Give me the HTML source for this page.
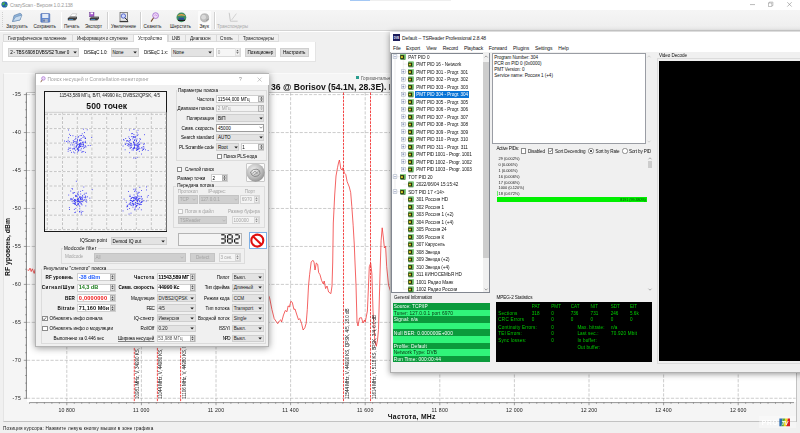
<!DOCTYPE html>
<html lang="ru"><head><meta charset="utf-8"><title>CrazyScan</title>
<style>
html,body{margin:0;padding:0;}
body{width:800px;height:433px;overflow:hidden;background:#f0f0f0;position:relative;font-family:"Liberation Sans",sans-serif;}
#root{position:absolute;left:0;top:0;width:800px;height:433px;overflow:hidden;filter:blur(0.35px);}
#root div,#root span.t,#root svg{position:absolute;box-sizing:border-box;}
span.t{white-space:nowrap;}
</style></head><body><div id="root">
<div style="left:0.00px;top:0.00px;width:800.00px;height:10.00px;background:#ffffff;"></div>
<div style="left:350.00px;top:0.00px;width:20.00px;height:1.00px;background:#a4c8f4;"></div>
<div style="left:370.00px;top:0.00px;width:81.00px;height:1.00px;background:#efefef;"></div>
<svg style="left:0.5px;top:0.8px;" width="7" height="7" viewBox="0 0 7 7"><circle cx="3.5" cy="3.5" r="3.1" fill="#1f5fb4"/><path d="M1.2 2.2 Q2.6 0.9 3.8 1.6 Q4.4 2.8 3.2 3.6 Q2.4 4.8 1.4 4.2 Z" fill="#4bb04a"/><path d="M4.4 3.6 Q5.8 3.2 6 4.4 Q5.4 5.8 4.4 5.4 Z" fill="#4bb04a"/></svg>
<span class="t" style="top:2px;font-size:5px;line-height:6.00px;color:#9a9a9a;letter-spacing:-0.190px;left:10.00px;">CrazyScan - Версия 1.0.2.138</span>
<svg style="left:745px;top:0px;" width="55" height="9" viewBox="0 0 55 9"><path d="M5 4.6 H10" stroke="#8a8a8a" stroke-width="0.6" fill="none"/><rect x="23.3" y="3" width="3.6" height="3.6" fill="none" stroke="#8a8a8a" stroke-width="0.5"/><path d="M24.3 3 V2.1 H27.9 V5.6 H26.9" fill="none" stroke="#8a8a8a" stroke-width="0.5"/><path d="M42.3 2.2 L46.7 6.6 M46.7 2.2 L42.3 6.6" stroke="#8a8a8a" stroke-width="0.6"/></svg>
<div style="left:0.00px;top:10.00px;width:800.00px;height:20.00px;background:linear-gradient(#f5f5f5,#eeeeee);"></div>
<div style="left:0.00px;top:29.60px;width:800.00px;height:0.90px;background:#d4d4d4;"></div>
<div style="left:0.00px;top:30.50px;width:800.00px;height:0.80px;background:#ffffff;"></div>
<div style="left:2.00px;top:11.50px;width:0.70px;height:0.90px;background:#d0d0d0;"></div>
<div style="left:2.00px;top:13.60px;width:0.70px;height:0.90px;background:#d0d0d0;"></div>
<div style="left:2.00px;top:15.70px;width:0.70px;height:0.90px;background:#d0d0d0;"></div>
<div style="left:2.00px;top:17.80px;width:0.70px;height:0.90px;background:#d0d0d0;"></div>
<div style="left:2.00px;top:19.90px;width:0.70px;height:0.90px;background:#d0d0d0;"></div>
<div style="left:2.00px;top:22.00px;width:0.70px;height:0.90px;background:#d0d0d0;"></div>
<div style="left:2.00px;top:24.10px;width:0.70px;height:0.90px;background:#d0d0d0;"></div>
<div style="left:2.00px;top:26.20px;width:0.70px;height:0.90px;background:#d0d0d0;"></div>
<div style="left:60.50px;top:11.50px;width:0.50px;height:17.00px;background:#d0d0d0;"></div>
<div style="left:61.00px;top:11.50px;width:0.50px;height:17.00px;background:#ffffff;"></div>
<div style="left:107.00px;top:11.50px;width:0.50px;height:17.00px;background:#d0d0d0;"></div>
<div style="left:107.50px;top:11.50px;width:0.50px;height:17.00px;background:#ffffff;"></div>
<div style="left:140.40px;top:11.50px;width:0.50px;height:17.00px;background:#d0d0d0;"></div>
<div style="left:140.90px;top:11.50px;width:0.50px;height:17.00px;background:#ffffff;"></div>
<div style="left:214.00px;top:11.50px;width:0.50px;height:17.00px;background:#d0d0d0;"></div>
<div style="left:214.50px;top:11.50px;width:0.50px;height:17.00px;background:#ffffff;"></div>
<div style="left:198.00px;top:11.00px;width:13.00px;height:18.50px;background:#fbfbfb;"></div>
<span class="t" style="top:24px;font-size:4.6px;line-height:5.52px;color:#202020;letter-spacing:0.055px;left:6.20px;">Загрузить</span>
<span class="t" style="top:24px;font-size:4.6px;line-height:5.52px;color:#202020;letter-spacing:-0.040px;left:33.50px;">Сохранить</span>
<span class="t" style="top:24px;font-size:4.6px;line-height:5.52px;color:#202020;letter-spacing:0.055px;left:64.00px;">Печать</span>
<span class="t" style="top:24px;font-size:4.6px;line-height:5.52px;color:#202020;letter-spacing:-0.040px;left:85.00px;">Экспорт</span>
<span class="t" style="top:24px;font-size:4.6px;line-height:5.52px;color:#202020;letter-spacing:-0.034px;left:111.00px;">Увеличение</span>
<span class="t" style="top:24px;font-size:4.6px;line-height:5.52px;color:#202020;letter-spacing:0.056px;left:143.60px;">Сканить</span>
<span class="t" style="top:24px;font-size:4.6px;line-height:5.52px;color:#202020;letter-spacing:0.024px;left:170.00px;">Шерстить</span>
<span class="t" style="top:24px;font-size:4.6px;line-height:5.52px;color:#202020;letter-spacing:0.042px;left:199.40px;">Звук</span>
<span class="t" style="top:24px;font-size:4.6px;line-height:5.52px;color:#a8a8a8;letter-spacing:-0.017px;left:217.00px;">Транспондеры</span>
<svg style="left:11px;top:11.5px;" width="12" height="11" viewBox="0 0 12 11"><path d="M1.5 9.5 L3 3.5 L9 1.2 L10.5 2.2 L9 8 Z" fill="#8fb3d9" stroke="#4a6f9a" stroke-width="0.5"/><path d="M1.5 9.5 L4.5 5 L11 3 L9 8 Z" fill="#c9dcef" stroke="#5c82ad" stroke-width="0.5"/></svg>
<svg style="left:40px;top:12.5px;" width="11" height="10" viewBox="0 0 11 10"><rect x="0.8" y="0.6" width="9" height="8.6" rx="0.6" fill="#6288cf" stroke="#3f5fa6" stroke-width="0.5"/><rect x="2.2" y="1" width="6.2" height="4" fill="#e4ebf7"/><rect x="2.8" y="6" width="5" height="3.2" fill="#aab6cc"/><rect x="3.4" y="6.6" width="1.2" height="2" fill="#4a5f8e"/></svg>
<svg style="left:67px;top:13px;" width="11" height="9" viewBox="0 0 11 9"><path d="M3 3.6 L5.2 0.8 L9.8 0.8 L8.2 3.6 Z" fill="#ffffff" stroke="#9a9a9a" stroke-width="0.4"/><path d="M0.8 5 L2.8 3.4 L9.8 3.4 L8.2 5 Z" fill="#6e6e6e"/><path d="M0.8 5 H8.2 V7.4 H0.8 Z" fill="#3c3c3c"/><path d="M8.2 5 L9.8 3.4 V5.8 L8.2 7.4 Z" fill="#222"/><rect x="1.8" y="6" width="4.4" height="0.7" fill="#4aa0e8"/></svg>
<svg style="left:88px;top:12px;" width="12" height="10" viewBox="0 0 12 10"><rect x="1.6" y="0.4" width="4.4" height="4.4" fill="#a056c8" stroke="#5e2d86" stroke-width="0.4"/><rect x="2.6" y="0.6" width="2.4" height="1.6" fill="#fff"/><path d="M1.8 6 L3.8 4.4 L10.8 4.4 L9.2 6 Z" fill="#6e6e6e"/><path d="M1.8 6 H9.2 V8.4 H1.8 Z" fill="#3c3c3c"/><path d="M9.2 6 L10.8 4.4 V6.8 L9.2 8.4 Z" fill="#222"/><rect x="2.8" y="7" width="4.4" height="0.7" fill="#4aa0e8"/></svg>
<svg style="left:118.5px;top:11.8px;" width="10" height="11" viewBox="0 0 10 11"><rect x="1" y="0.6" width="7.4" height="8.6" fill="#e6e6e6" stroke="#4a4a4a" stroke-width="0.6"/><circle cx="4.4" cy="4" r="2.2" fill="#cfd8ff" stroke="#2a3fb8" stroke-width="0.7"/><path d="M6 5.8 L8.6 8.6" stroke="#222" stroke-width="1"/><rect x="0.6" y="9" width="8.6" height="1.2" fill="#3a3a3a"/></svg>
<svg style="left:149.5px;top:12px;" width="10" height="11" viewBox="0 0 10 11"><circle cx="5.6" cy="3.6" r="2.9" fill="#ead6f6" stroke="#a26ad0" stroke-width="0.8"/><path d="M3.6 5.8 L1 9.6" stroke="#7a4a2a" stroke-width="1.1"/><path d="M4.4 3.6 L5.4 2.6 L6.4 4 L7.2 3" stroke="#c04ad0" stroke-width="0.4" fill="none"/></svg>
<svg style="left:176px;top:11.8px;" width="11" height="11" viewBox="0 0 11 11"><circle cx="5.4" cy="5.4" r="4.9" fill="#3f8f62"/><path d="M1 4 Q5.4 0.2 9.8 4 Q5.4 3 1 4Z" fill="#e9a04a"/><path d="M2 7.6 H9 V9 H2Z" fill="#1e1e1e"/><path d="M2.6 5.6 H8 V7.6 H2.6Z" fill="#2a4aa0"/></svg>
<svg style="left:200px;top:12.5px;" width="10" height="10" viewBox="0 0 10 10"><circle cx="4.6" cy="4.8" r="4.1" fill="#bdbdbd" stroke="#9a9a9a" stroke-width="0.5"/><circle cx="3.6" cy="4.2" r="2.4" fill="#d9d9d9"/><path d="M6 7.6 L8.8 6" stroke="#8a8a8a" stroke-width="0.8"/></svg>
<svg style="left:228px;top:12px;" width="11" height="11" viewBox="0 0 11 11"><path d="M1.2 0.8 L2.4 9.2 H9.6" fill="none" stroke="#b8b8b8" stroke-width="0.7"/><path d="M3.6 8 L8.4 1.6" stroke="#c4c4c4" stroke-width="0.7"/></svg>
<div style="left:3.00px;top:34.40px;width:276.00px;height:7.80px;background:#f0f0f0;border:0.5px solid #dcdcdc;"></div>
<div style="left:71.70px;top:34.80px;width:0.50px;height:7.20px;background:#d9d9d9;"></div>
<div style="left:132.50px;top:34.80px;width:0.50px;height:7.20px;background:#d9d9d9;"></div>
<div style="left:168.00px;top:34.80px;width:0.50px;height:7.20px;background:#d9d9d9;"></div>
<div style="left:185.00px;top:34.80px;width:0.50px;height:7.20px;background:#d9d9d9;"></div>
<div style="left:215.50px;top:34.80px;width:0.50px;height:7.20px;background:#d9d9d9;"></div>
<div style="left:238.00px;top:34.80px;width:0.50px;height:7.20px;background:#d9d9d9;"></div>
<div style="left:132.50px;top:33.60px;width:35.80px;height:9.00px;background:#ffffff;border:0.5px solid #d9d9d9;border-bottom:none;"></div>
<span class="t" style="top:36px;font-size:4.6px;line-height:5.52px;color:#1a1a1a;letter-spacing:-0.048px;left:8.00px;">Географическое положение</span>
<span class="t" style="top:36px;font-size:4.6px;line-height:5.52px;color:#1a1a1a;letter-spacing:-0.057px;left:77.00px;">Информация о спутнике</span>
<span class="t" style="top:36px;font-size:4.6px;line-height:5.52px;color:#1a1a1a;letter-spacing:-0.006px;left:138.00px;">Устройство</span>
<span class="t" style="top:36px;font-size:4.6px;line-height:5.52px;color:#1a1a1a;letter-spacing:-0.483px;left:172.00px;">LNB</span>
<span class="t" style="top:36px;font-size:4.6px;line-height:5.52px;color:#1a1a1a;letter-spacing:0.013px;left:190.00px;">Диапазон</span>
<span class="t" style="top:36px;font-size:4.6px;line-height:5.52px;color:#1a1a1a;letter-spacing:-0.116px;left:220.00px;">Стиль</span>
<span class="t" style="top:36px;font-size:4.6px;line-height:5.52px;color:#1a1a1a;letter-spacing:-0.017px;left:243.00px;">Транспондеры</span>
<div style="left:2.30px;top:41.80px;width:313.30px;height:20.40px;background:#ffffff;border:0.5px solid #e4e4e4;border-top:none;"></div>
<div style="left:8.20px;top:47.50px;width:70.60px;height:9.00px;background:#e3e3e3;border:0.5px solid #cfcfcf;"></div>
<span class="t" style="top:50px;font-size:4.6px;line-height:5.52px;color:#000;letter-spacing:-0.200px;left:10.20px;">2 - TBS 6908 DVBS/S2 Tuner 0</span>
<svg style="left:73.19999999999999px;top:50.8px;" width="4.4" height="3" viewBox="0 0 4.4 3"><path d="M0.3 0.4 H3.9 L2.1 2.5 Z" fill="#222"/></svg>
<span class="t" style="top:50px;font-size:4.5px;line-height:5.40px;color:#000;letter-spacing:-0.115px;left:84.00px;">DiSEqC 1.0:</span>
<div style="left:110.50px;top:47.50px;width:28.50px;height:9.00px;background:#e3e3e3;border:0.5px solid #cfcfcf;"></div>
<span class="t" style="top:50px;font-size:4.6px;line-height:5.52px;color:#000;left:112.50px;">None</span>
<svg style="left:133.4px;top:50.8px;" width="4.4" height="3" viewBox="0 0 4.4 3"><path d="M0.3 0.4 H3.9 L2.1 2.5 Z" fill="#222"/></svg>
<span class="t" style="top:50px;font-size:4.5px;line-height:5.40px;color:#000;letter-spacing:-0.046px;left:144.00px;">DiSEqC 1.x:</span>
<div style="left:171.00px;top:47.50px;width:43.00px;height:9.00px;background:#e3e3e3;border:0.5px solid #cfcfcf;"></div>
<span class="t" style="top:50px;font-size:4.6px;line-height:5.52px;color:#000;left:173.00px;">None</span>
<svg style="left:208.4px;top:50.8px;" width="4.4" height="3" viewBox="0 0 4.4 3"><path d="M0.3 0.4 H3.9 L2.1 2.5 Z" fill="#222"/></svg>
<div style="left:216.00px;top:47.50px;width:25.00px;height:9.00px;background:#f6f6f6;border:0.5px solid #dadada;"></div>
<div style="left:235.10px;top:48.10px;width:5.40px;height:7.80px;background:#f2f2f2;border:0.4px solid #e2e2e2;"></div>
<svg style="left:236.3px;top:48.3px;" width="3" height="7.4" viewBox="0 0 3 7.4"><path d="M0.3 3.20 L1.5 1.70 L2.7 3.20 Z" fill="#555"/><path d="M0.3 4.20 L1.5 5.70 L2.7 4.20 Z" fill="#555"/></svg>
<span class="t" style="top:50px;font-size:4.6px;line-height:5.52px;color:#9a9a9a;left:217.80px;">0</span>
<div style="left:245.00px;top:47.50px;width:31.00px;height:9.00px;background:#e1e1e1;border:0.5px solid #cfcfcf;"></div>
<span class="t" style="top:50px;font-size:4.6px;line-height:5.52px;color:#000;left:160.50px;width:200px;text-align:center;">Позиционер</span>
<div style="left:279.50px;top:47.50px;width:29.50px;height:9.00px;background:#e1e1e1;border:0.5px solid #cfcfcf;"></div>
<span class="t" style="top:50px;font-size:4.6px;line-height:5.52px;color:#000;left:194.25px;width:200px;text-align:center;">Настроить</span>
<div style="left:2.60px;top:73.20px;width:794.20px;height:348.60px;background:#f5f5f5;border:0.5px solid #c2c2c2;border-top-color:#fafafa;border-left-color:#e4e4e4;"></div>
<div style="left:26.80px;top:93.00px;width:769.00px;height:309.00px;background:#ffffff;"></div>
<svg style="left:0px;top:0px;" width="800" height="433" viewBox="0 0 800 433"><path d="M66.80 92.5 V402.3" stroke="#a4a4a4" stroke-width="0.55" stroke-dasharray="3.2 1.5" fill="none"/><path d="M141.40 92.5 V402.3" stroke="#a4a4a4" stroke-width="0.55" stroke-dasharray="3.2 1.5" fill="none"/><path d="M216.00 92.5 V402.3" stroke="#a4a4a4" stroke-width="0.55" stroke-dasharray="3.2 1.5" fill="none"/><path d="M290.60 92.5 V402.3" stroke="#a4a4a4" stroke-width="0.55" stroke-dasharray="3.2 1.5" fill="none"/><path d="M365.20 92.5 V402.3" stroke="#a4a4a4" stroke-width="0.55" stroke-dasharray="3.2 1.5" fill="none"/><path d="M439.80 92.5 V402.3" stroke="#a4a4a4" stroke-width="0.55" stroke-dasharray="3.2 1.5" fill="none"/><path d="M514.40 92.5 V402.3" stroke="#a4a4a4" stroke-width="0.55" stroke-dasharray="3.2 1.5" fill="none"/><path d="M589.00 92.5 V402.3" stroke="#a4a4a4" stroke-width="0.55" stroke-dasharray="3.2 1.5" fill="none"/><path d="M663.60 92.5 V402.3" stroke="#a4a4a4" stroke-width="0.55" stroke-dasharray="3.2 1.5" fill="none"/><path d="M738.20 92.5 V402.3" stroke="#a4a4a4" stroke-width="0.55" stroke-dasharray="3.2 1.5" fill="none"/><path d="M27.0 94.60 H795.6" stroke="#a4a4a4" stroke-width="0.55" stroke-dasharray="3.2 1.5" fill="none"/><path d="M27.0 132.56 H795.6" stroke="#a4a4a4" stroke-width="0.55" stroke-dasharray="3.2 1.5" fill="none"/><path d="M27.0 170.52 H795.6" stroke="#a4a4a4" stroke-width="0.55" stroke-dasharray="3.2 1.5" fill="none"/><path d="M27.0 208.48 H795.6" stroke="#a4a4a4" stroke-width="0.55" stroke-dasharray="3.2 1.5" fill="none"/><path d="M27.0 246.44 H795.6" stroke="#a4a4a4" stroke-width="0.55" stroke-dasharray="3.2 1.5" fill="none"/><path d="M27.0 284.40 H795.6" stroke="#a4a4a4" stroke-width="0.55" stroke-dasharray="3.2 1.5" fill="none"/><path d="M27.0 322.36 H795.6" stroke="#a4a4a4" stroke-width="0.55" stroke-dasharray="3.2 1.5" fill="none"/><path d="M27.0 360.32 H795.6" stroke="#a4a4a4" stroke-width="0.55" stroke-dasharray="3.2 1.5" fill="none"/><path d="M27.0 398.28 H795.6" stroke="#a4a4a4" stroke-width="0.55" stroke-dasharray="3.2 1.5" fill="none"/><path d="M27.0 92.5 H795.6" stroke="#9a9a9a" stroke-width="0.5" fill="none"/><path d="M26.4 92.5 V398.78" stroke="#333" stroke-width="0.6" fill="none"/><path d="M29.5 402.6 H794" stroke="#444" stroke-width="0.55" fill="none"/><path d="M23.80 94.60 H26.4" stroke="#333" stroke-width="0.45" fill="none"/><path d="M25.20 102.19 H26.4" stroke="#333" stroke-width="0.45" fill="none"/><path d="M25.20 109.78 H26.4" stroke="#333" stroke-width="0.45" fill="none"/><path d="M25.20 117.38 H26.4" stroke="#333" stroke-width="0.45" fill="none"/><path d="M25.20 124.97 H26.4" stroke="#333" stroke-width="0.45" fill="none"/><path d="M23.80 132.56 H26.4" stroke="#333" stroke-width="0.45" fill="none"/><path d="M25.20 140.15 H26.4" stroke="#333" stroke-width="0.45" fill="none"/><path d="M25.20 147.74 H26.4" stroke="#333" stroke-width="0.45" fill="none"/><path d="M25.20 155.34 H26.4" stroke="#333" stroke-width="0.45" fill="none"/><path d="M25.20 162.93 H26.4" stroke="#333" stroke-width="0.45" fill="none"/><path d="M23.80 170.52 H26.4" stroke="#333" stroke-width="0.45" fill="none"/><path d="M25.20 178.11 H26.4" stroke="#333" stroke-width="0.45" fill="none"/><path d="M25.20 185.70 H26.4" stroke="#333" stroke-width="0.45" fill="none"/><path d="M25.20 193.30 H26.4" stroke="#333" stroke-width="0.45" fill="none"/><path d="M25.20 200.89 H26.4" stroke="#333" stroke-width="0.45" fill="none"/><path d="M23.80 208.48 H26.4" stroke="#333" stroke-width="0.45" fill="none"/><path d="M25.20 216.07 H26.4" stroke="#333" stroke-width="0.45" fill="none"/><path d="M25.20 223.66 H26.4" stroke="#333" stroke-width="0.45" fill="none"/><path d="M25.20 231.26 H26.4" stroke="#333" stroke-width="0.45" fill="none"/><path d="M25.20 238.85 H26.4" stroke="#333" stroke-width="0.45" fill="none"/><path d="M23.80 246.44 H26.4" stroke="#333" stroke-width="0.45" fill="none"/><path d="M25.20 254.03 H26.4" stroke="#333" stroke-width="0.45" fill="none"/><path d="M25.20 261.62 H26.4" stroke="#333" stroke-width="0.45" fill="none"/><path d="M25.20 269.22 H26.4" stroke="#333" stroke-width="0.45" fill="none"/><path d="M25.20 276.81 H26.4" stroke="#333" stroke-width="0.45" fill="none"/><path d="M23.80 284.40 H26.4" stroke="#333" stroke-width="0.45" fill="none"/><path d="M25.20 291.99 H26.4" stroke="#333" stroke-width="0.45" fill="none"/><path d="M25.20 299.58 H26.4" stroke="#333" stroke-width="0.45" fill="none"/><path d="M25.20 307.18 H26.4" stroke="#333" stroke-width="0.45" fill="none"/><path d="M25.20 314.77 H26.4" stroke="#333" stroke-width="0.45" fill="none"/><path d="M23.80 322.36 H26.4" stroke="#333" stroke-width="0.45" fill="none"/><path d="M25.20 329.95 H26.4" stroke="#333" stroke-width="0.45" fill="none"/><path d="M25.20 337.54 H26.4" stroke="#333" stroke-width="0.45" fill="none"/><path d="M25.20 345.14 H26.4" stroke="#333" stroke-width="0.45" fill="none"/><path d="M25.20 352.73 H26.4" stroke="#333" stroke-width="0.45" fill="none"/><path d="M23.80 360.32 H26.4" stroke="#333" stroke-width="0.45" fill="none"/><path d="M25.20 367.91 H26.4" stroke="#333" stroke-width="0.45" fill="none"/><path d="M25.20 375.50 H26.4" stroke="#333" stroke-width="0.45" fill="none"/><path d="M25.20 383.10 H26.4" stroke="#333" stroke-width="0.45" fill="none"/><path d="M25.20 390.69 H26.4" stroke="#333" stroke-width="0.45" fill="none"/><path d="M23.80 398.28 H26.4" stroke="#333" stroke-width="0.45" fill="none"/><path d="M29.50 402.6 V403.80" stroke="#333" stroke-width="0.45" fill="none"/><path d="M36.96 402.6 V403.80" stroke="#333" stroke-width="0.45" fill="none"/><path d="M44.42 402.6 V403.80" stroke="#333" stroke-width="0.45" fill="none"/><path d="M51.88 402.6 V403.80" stroke="#333" stroke-width="0.45" fill="none"/><path d="M59.34 402.6 V403.80" stroke="#333" stroke-width="0.45" fill="none"/><path d="M66.80 402.6 V405.20" stroke="#333" stroke-width="0.45" fill="none"/><path d="M74.26 402.6 V403.80" stroke="#333" stroke-width="0.45" fill="none"/><path d="M81.72 402.6 V403.80" stroke="#333" stroke-width="0.45" fill="none"/><path d="M89.18 402.6 V403.80" stroke="#333" stroke-width="0.45" fill="none"/><path d="M96.64 402.6 V403.80" stroke="#333" stroke-width="0.45" fill="none"/><path d="M104.10 402.6 V403.80" stroke="#333" stroke-width="0.45" fill="none"/><path d="M111.56 402.6 V403.80" stroke="#333" stroke-width="0.45" fill="none"/><path d="M119.02 402.6 V403.80" stroke="#333" stroke-width="0.45" fill="none"/><path d="M126.48 402.6 V403.80" stroke="#333" stroke-width="0.45" fill="none"/><path d="M133.94 402.6 V403.80" stroke="#333" stroke-width="0.45" fill="none"/><path d="M141.40 402.6 V405.20" stroke="#333" stroke-width="0.45" fill="none"/><path d="M148.86 402.6 V403.80" stroke="#333" stroke-width="0.45" fill="none"/><path d="M156.32 402.6 V403.80" stroke="#333" stroke-width="0.45" fill="none"/><path d="M163.78 402.6 V403.80" stroke="#333" stroke-width="0.45" fill="none"/><path d="M171.24 402.6 V403.80" stroke="#333" stroke-width="0.45" fill="none"/><path d="M178.70 402.6 V403.80" stroke="#333" stroke-width="0.45" fill="none"/><path d="M186.16 402.6 V403.80" stroke="#333" stroke-width="0.45" fill="none"/><path d="M193.62 402.6 V403.80" stroke="#333" stroke-width="0.45" fill="none"/><path d="M201.08 402.6 V403.80" stroke="#333" stroke-width="0.45" fill="none"/><path d="M208.54 402.6 V403.80" stroke="#333" stroke-width="0.45" fill="none"/><path d="M216.00 402.6 V405.20" stroke="#333" stroke-width="0.45" fill="none"/><path d="M223.46 402.6 V403.80" stroke="#333" stroke-width="0.45" fill="none"/><path d="M230.92 402.6 V403.80" stroke="#333" stroke-width="0.45" fill="none"/><path d="M238.38 402.6 V403.80" stroke="#333" stroke-width="0.45" fill="none"/><path d="M245.84 402.6 V403.80" stroke="#333" stroke-width="0.45" fill="none"/><path d="M253.30 402.6 V403.80" stroke="#333" stroke-width="0.45" fill="none"/><path d="M260.76 402.6 V403.80" stroke="#333" stroke-width="0.45" fill="none"/><path d="M268.22 402.6 V403.80" stroke="#333" stroke-width="0.45" fill="none"/><path d="M275.68 402.6 V403.80" stroke="#333" stroke-width="0.45" fill="none"/><path d="M283.14 402.6 V403.80" stroke="#333" stroke-width="0.45" fill="none"/><path d="M290.60 402.6 V405.20" stroke="#333" stroke-width="0.45" fill="none"/><path d="M298.06 402.6 V403.80" stroke="#333" stroke-width="0.45" fill="none"/><path d="M305.52 402.6 V403.80" stroke="#333" stroke-width="0.45" fill="none"/><path d="M312.98 402.6 V403.80" stroke="#333" stroke-width="0.45" fill="none"/><path d="M320.44 402.6 V403.80" stroke="#333" stroke-width="0.45" fill="none"/><path d="M327.90 402.6 V403.80" stroke="#333" stroke-width="0.45" fill="none"/><path d="M335.36 402.6 V403.80" stroke="#333" stroke-width="0.45" fill="none"/><path d="M342.82 402.6 V403.80" stroke="#333" stroke-width="0.45" fill="none"/><path d="M350.28 402.6 V403.80" stroke="#333" stroke-width="0.45" fill="none"/><path d="M357.74 402.6 V403.80" stroke="#333" stroke-width="0.45" fill="none"/><path d="M365.20 402.6 V405.20" stroke="#333" stroke-width="0.45" fill="none"/><path d="M372.66 402.6 V403.80" stroke="#333" stroke-width="0.45" fill="none"/><path d="M380.12 402.6 V403.80" stroke="#333" stroke-width="0.45" fill="none"/><path d="M387.58 402.6 V403.80" stroke="#333" stroke-width="0.45" fill="none"/><path d="M395.04 402.6 V403.80" stroke="#333" stroke-width="0.45" fill="none"/><path d="M402.50 402.6 V403.80" stroke="#333" stroke-width="0.45" fill="none"/><path d="M409.96 402.6 V403.80" stroke="#333" stroke-width="0.45" fill="none"/><path d="M417.42 402.6 V403.80" stroke="#333" stroke-width="0.45" fill="none"/><path d="M424.88 402.6 V403.80" stroke="#333" stroke-width="0.45" fill="none"/><path d="M432.34 402.6 V403.80" stroke="#333" stroke-width="0.45" fill="none"/><path d="M439.80 402.6 V405.20" stroke="#333" stroke-width="0.45" fill="none"/><path d="M447.26 402.6 V403.80" stroke="#333" stroke-width="0.45" fill="none"/><path d="M454.72 402.6 V403.80" stroke="#333" stroke-width="0.45" fill="none"/><path d="M462.18 402.6 V403.80" stroke="#333" stroke-width="0.45" fill="none"/><path d="M469.64 402.6 V403.80" stroke="#333" stroke-width="0.45" fill="none"/><path d="M477.10 402.6 V403.80" stroke="#333" stroke-width="0.45" fill="none"/><path d="M484.56 402.6 V403.80" stroke="#333" stroke-width="0.45" fill="none"/><path d="M492.02 402.6 V403.80" stroke="#333" stroke-width="0.45" fill="none"/><path d="M499.48 402.6 V403.80" stroke="#333" stroke-width="0.45" fill="none"/><path d="M506.94 402.6 V403.80" stroke="#333" stroke-width="0.45" fill="none"/><path d="M514.40 402.6 V405.20" stroke="#333" stroke-width="0.45" fill="none"/><path d="M521.86 402.6 V403.80" stroke="#333" stroke-width="0.45" fill="none"/><path d="M529.32 402.6 V403.80" stroke="#333" stroke-width="0.45" fill="none"/><path d="M536.78 402.6 V403.80" stroke="#333" stroke-width="0.45" fill="none"/><path d="M544.24 402.6 V403.80" stroke="#333" stroke-width="0.45" fill="none"/><path d="M551.70 402.6 V403.80" stroke="#333" stroke-width="0.45" fill="none"/><path d="M559.16 402.6 V403.80" stroke="#333" stroke-width="0.45" fill="none"/><path d="M566.62 402.6 V403.80" stroke="#333" stroke-width="0.45" fill="none"/><path d="M574.08 402.6 V403.80" stroke="#333" stroke-width="0.45" fill="none"/><path d="M581.54 402.6 V403.80" stroke="#333" stroke-width="0.45" fill="none"/><path d="M589.00 402.6 V405.20" stroke="#333" stroke-width="0.45" fill="none"/><path d="M596.46 402.6 V403.80" stroke="#333" stroke-width="0.45" fill="none"/><path d="M603.92 402.6 V403.80" stroke="#333" stroke-width="0.45" fill="none"/><path d="M611.38 402.6 V403.80" stroke="#333" stroke-width="0.45" fill="none"/><path d="M618.84 402.6 V403.80" stroke="#333" stroke-width="0.45" fill="none"/><path d="M626.30 402.6 V403.80" stroke="#333" stroke-width="0.45" fill="none"/><path d="M633.76 402.6 V403.80" stroke="#333" stroke-width="0.45" fill="none"/><path d="M641.22 402.6 V403.80" stroke="#333" stroke-width="0.45" fill="none"/><path d="M648.68 402.6 V403.80" stroke="#333" stroke-width="0.45" fill="none"/><path d="M656.14 402.6 V403.80" stroke="#333" stroke-width="0.45" fill="none"/><path d="M663.60 402.6 V405.20" stroke="#333" stroke-width="0.45" fill="none"/><path d="M671.06 402.6 V403.80" stroke="#333" stroke-width="0.45" fill="none"/><path d="M678.52 402.6 V403.80" stroke="#333" stroke-width="0.45" fill="none"/><path d="M685.98 402.6 V403.80" stroke="#333" stroke-width="0.45" fill="none"/><path d="M693.44 402.6 V403.80" stroke="#333" stroke-width="0.45" fill="none"/><path d="M700.90 402.6 V403.80" stroke="#333" stroke-width="0.45" fill="none"/><path d="M708.36 402.6 V403.80" stroke="#333" stroke-width="0.45" fill="none"/><path d="M715.82 402.6 V403.80" stroke="#333" stroke-width="0.45" fill="none"/><path d="M723.28 402.6 V403.80" stroke="#333" stroke-width="0.45" fill="none"/><path d="M730.74 402.6 V403.80" stroke="#333" stroke-width="0.45" fill="none"/><path d="M738.20 402.6 V405.20" stroke="#333" stroke-width="0.45" fill="none"/><path d="M745.66 402.6 V403.80" stroke="#333" stroke-width="0.45" fill="none"/><path d="M753.12 402.6 V403.80" stroke="#333" stroke-width="0.45" fill="none"/><path d="M760.58 402.6 V403.80" stroke="#333" stroke-width="0.45" fill="none"/><path d="M768.04 402.6 V403.80" stroke="#333" stroke-width="0.45" fill="none"/><path d="M775.50 402.6 V403.80" stroke="#333" stroke-width="0.45" fill="none"/><path d="M782.96 402.6 V403.80" stroke="#333" stroke-width="0.45" fill="none"/><path d="M790.42 402.6 V403.80" stroke="#333" stroke-width="0.45" fill="none"/><path d="M134.3 92.5 V402.3" stroke="#f01818" stroke-width="0.8" stroke-dasharray="2.6 1" fill="none"/><path d="M157.4 92.5 V402.3" stroke="#f01818" stroke-width="0.8" stroke-dasharray="2.6 1" fill="none"/><path d="M180.6 92.5 V402.3" stroke="#f01818" stroke-width="0.8" stroke-dasharray="2.6 1" fill="none"/><path d="M343.5 92.5 V402.3" stroke="#f01818" stroke-width="0.8" stroke-dasharray="2.6 1" fill="none"/><path d="M370.5 92.5 V402.3" stroke="#f01818" stroke-width="0.8" stroke-dasharray="2.6 1" fill="none"/><path d="M27.5 270 L28.9 270.4 L30 268.1 L31.2 271.6 L32.3 268.8 L34.2 273.4 L35.1 269.3 L36 270.4 L40 268 L262 285 L266 290 L269.6 297.8 L271.9 309.4 L274.2 318.6 L277.7 323.7 L279.3 321 L280.7 319.8 L281.6 322 L283.5 315 L285.3 310.5 L287 311.7 L288.1 305.9 L289.3 307 L290.9 301.3 L292.3 302.4 L293.9 309.4 L295 309 L296.9 315 L298.5 319.8 L299.7 318.6 L301.5 323.2 L303.1 330 L304.8 327.9 L306.2 323.2 L307.3 309.4 L308.5 286 L309.6 274.7 L311.2 262 L312.9 260.3 L314 262 L315 270 L316.3 263 L317.7 264.3 L318.6 272.4 L320 274.7 L321.6 280.5 L323.3 284 L324.2 281 L325.6 288.6 L327 286 L328.6 292 L330.9 293.6 L332 286 L332.7 263 L333.3 223 L334.7 195 L336 176 L337.5 167.7 L338.5 163 L339.4 160 L340.1 164 L340.8 169 L342.2 170 L343 167.7 L344.4 173 L345.8 174.6 L347.1 181.5 L349.3 187 L350.7 192.6 L351.8 206.4 L353.2 225.8 L354.3 245 L354.9 260 L356 285 L357 322 L358 326 L359.5 318 L361.5 317.7 L363 323 L364.5 320 L365.2 322.2 L367.4 311 L368.4 288 L369.3 266.7 L370.7 263 L371.9 274 L373 311 L374.8 340.7 L376.3 346.3 L377.5 340 L378.5 329.6 L380 274 L381.1 240.7 L382.2 227.8 L383.3 237 L384.4 248 L385.6 246.3 L386.7 266.7 L388.5 285 L390.4 290.7 L392 295" stroke="#f03030" stroke-width="0.75" fill="none" stroke-linejoin="round"/></svg>
<span class="t" style="top:91px;font-size:5.2px;line-height:6.24px;color:#222;letter-spacing:0.362px;left:12.60px;">-35</span>
<span class="t" style="top:129px;font-size:5.2px;line-height:6.24px;color:#222;letter-spacing:0.362px;left:12.60px;">-40</span>
<span class="t" style="top:167px;font-size:5.2px;line-height:6.24px;color:#222;letter-spacing:0.362px;left:12.60px;">-45</span>
<span class="t" style="top:205px;font-size:5.2px;line-height:6.24px;color:#222;letter-spacing:0.362px;left:12.60px;">-50</span>
<span class="t" style="top:243px;font-size:5.2px;line-height:6.24px;color:#222;letter-spacing:0.362px;left:12.60px;">-55</span>
<span class="t" style="top:281px;font-size:5.2px;line-height:6.24px;color:#222;letter-spacing:0.362px;left:12.60px;">-60</span>
<span class="t" style="top:319px;font-size:5.2px;line-height:6.24px;color:#222;letter-spacing:0.362px;left:12.60px;">-65</span>
<span class="t" style="top:357px;font-size:5.2px;line-height:6.24px;color:#222;letter-spacing:0.362px;left:12.60px;">-70</span>
<span class="t" style="top:395px;font-size:5.2px;line-height:6.24px;color:#222;letter-spacing:0.362px;left:12.60px;">-75</span>
<span class="t" style="top:407px;font-size:5.2px;line-height:6.24px;color:#222;letter-spacing:0.116px;left:58.50px;">10 800</span>
<span class="t" style="top:407px;font-size:5.2px;line-height:6.24px;color:#222;letter-spacing:0.180px;left:133.10px;">11 000</span>
<span class="t" style="top:407px;font-size:5.2px;line-height:6.24px;color:#222;letter-spacing:0.180px;left:207.70px;">11 200</span>
<span class="t" style="top:407px;font-size:5.2px;line-height:6.24px;color:#222;letter-spacing:0.180px;left:282.30px;">11 400</span>
<span class="t" style="top:407px;font-size:5.2px;line-height:6.24px;color:#222;letter-spacing:0.180px;left:356.90px;">11 600</span>
<span class="t" style="top:407px;font-size:5.2px;line-height:6.24px;color:#222;letter-spacing:0.180px;left:431.50px;">11 800</span>
<span class="t" style="top:407px;font-size:5.2px;line-height:6.24px;color:#222;letter-spacing:0.116px;left:506.10px;">12 000</span>
<span class="t" style="top:407px;font-size:5.2px;line-height:6.24px;color:#222;letter-spacing:0.116px;left:580.70px;">12 200</span>
<span class="t" style="top:407px;font-size:5.2px;line-height:6.24px;color:#222;letter-spacing:0.116px;left:655.30px;">12 400</span>
<span class="t" style="top:407px;font-size:5.2px;line-height:6.24px;color:#222;letter-spacing:0.116px;left:729.90px;">12 600</span>
<span class="t" style="top:413px;font-size:6.8px;line-height:8.16px;color:#111;letter-spacing:0.297px;font-weight:bold;left:387.80px;">Частота, MHz</span>
<span class="t" style="left:-32.4px;top:242.6px;width:80px;text-align:center;font-size:6.8px;line-height:8px;font-weight:bold;color:#111;transform:rotate(-90deg);transform-origin:50% 50%;">RF уровень, dBm</span>
<span class="t" style="top:82px;font-size:8.6px;line-height:10.32px;color:#111;font-weight:bold;left:271.00px;">36 @ Borisov (54.1N, 28.3E). Вертикальная поляризация</span>
<div style="left:355.70px;top:76.10px;width:3.30px;height:3.30px;background:#2a9d8f;"></div>
<span class="t" style="top:76px;font-size:4.6px;line-height:5.52px;color:#555;left:360.90px;">Горизонтальная</span>
<span class="t" style="left:135.30px;top:399.30px;font-size:4.6px;line-height:5.52px;color:#111;letter-spacing:-0.08px;transform:rotate(-90deg);transform-origin:0 0;">10981 MHz, V, 34990 KS, 8PSK, 3/4, 13.6 dB</span>
<span class="t" style="left:158.40px;top:399.30px;font-size:4.6px;line-height:5.52px;color:#111;letter-spacing:-0.08px;transform:rotate(-90deg);transform-origin:0 0;">11044 MHz, V, 44980 KS, 8PSK, 5/6, 14.6 dB</span>
<span class="t" style="left:181.60px;top:399.30px;font-size:4.6px;line-height:5.52px;color:#111;letter-spacing:-0.08px;transform:rotate(-90deg);transform-origin:0 0;">11106 MHz, V, 44980 KS, 8PSK, 5/6, 14.2 dB</span>
<span class="t" style="left:344.50px;top:399.30px;font-size:4.6px;line-height:5.52px;color:#111;letter-spacing:-0.08px;transform:rotate(-90deg);transform-origin:0 0;">11544 MHz, V, 44990 KS, QPSK, 4/5, 18.0 dB</span>
<span class="t" style="left:371.50px;top:399.30px;font-size:4.6px;line-height:5.52px;color:#111;letter-spacing:-0.08px;transform:rotate(-90deg);transform-origin:0 0;">11614 MHz, V, 5118 KS, 8PSK, 3/4, 6.0 dB</span>
<span class="t" style="top:426px;font-size:4.6px;line-height:5.52px;color:#111;letter-spacing:0.219px;left:3.00px;">Позиция курсора: Нажмите левую кнопку мышки в зоне графика</span>
<div style="left:35.00px;top:73.00px;width:234.30px;height:273.70px;background:#f0f0f0;border:0.5px solid #b4b4b4;box-shadow:0 1px 7px rgba(0,0,0,0.42);"></div>
<div style="left:35.50px;top:73.50px;width:233.30px;height:11.00px;background:#ffffff;"></div>
<svg style="left:40px;top:75.5px;" width="6" height="7" viewBox="0 0 6 7"><circle cx="3.4" cy="2.4" r="1.8" fill="#ead6f6" stroke="#a26ad0" stroke-width="0.6"/><path d="M2.2 3.8 L0.8 6.2" stroke="#7a4a2a" stroke-width="0.8"/></svg>
<span class="t" style="top:77px;font-size:4.8px;line-height:5.76px;color:#9a9a9a;letter-spacing:0.173px;left:47.50px;">Поиск несущей и Constellation-мониторинг</span>
<span class="t" style="top:76px;font-size:5px;line-height:6.00px;color:#8a8a8a;left:140.50px;width:200px;text-align:center;">?</span>
<svg style="left:257px;top:77px;" width="6" height="6" viewBox="0 0 6 6"><path d="M0.6 0.6 L4.6 4.6 M4.6 0.6 L0.6 4.6" stroke="#9a9a9a" stroke-width="0.55"/></svg>
<div style="left:44.00px;top:90.50px;width:123.00px;height:141.30px;background:#f3f3f3;border:0.9px solid #1a1a1a;"></div>
<span class="t" style="top:93px;font-size:4.6px;line-height:5.52px;color:#222;letter-spacing:-0.080px;left:59.50px;">11543,589 МГц, В/П, 44990 Кс, DVBS2/QPSK, 4/5</span>
<span class="t" style="top:101px;font-size:8.6px;line-height:10.32px;color:#111;letter-spacing:0.116px;font-weight:bold;left:86.30px;">500 точек</span>
<svg style="left:0px;top:0px;" width="800" height="433" viewBox="0 0 800 433"><path d="M45.0 112.3 H166.0" stroke="#a8a8a8" stroke-width="0.5"/><path d="M47.3 112.3 V230.8" stroke="#ffffff" stroke-width="1.1" fill="none"/><path d="M47.3 112.3 V230.8" stroke="#9a9a9a" stroke-width="0.6" stroke-dasharray="3 1.4" fill="none"/><path d="M62.5 112.3 V230.8" stroke="#ffffff" stroke-width="1.1" fill="none"/><path d="M62.5 112.3 V230.8" stroke="#9a9a9a" stroke-width="0.6" stroke-dasharray="3 1.4" fill="none"/><path d="M77.3 112.3 V230.8" stroke="#ffffff" stroke-width="1.1" fill="none"/><path d="M77.3 112.3 V230.8" stroke="#9a9a9a" stroke-width="0.6" stroke-dasharray="3 1.4" fill="none"/><path d="M91.9 112.3 V230.8" stroke="#ffffff" stroke-width="1.1" fill="none"/><path d="M91.9 112.3 V230.8" stroke="#9a9a9a" stroke-width="0.6" stroke-dasharray="3 1.4" fill="none"/><path d="M106.7 112.3 V230.8" stroke="#ffffff" stroke-width="1.1" fill="none"/><path d="M106.7 112.3 V230.8" stroke="#9a9a9a" stroke-width="0.6" stroke-dasharray="3 1.4" fill="none"/><path d="M121.5 112.3 V230.8" stroke="#ffffff" stroke-width="1.1" fill="none"/><path d="M121.5 112.3 V230.8" stroke="#9a9a9a" stroke-width="0.6" stroke-dasharray="3 1.4" fill="none"/><path d="M136.3 112.3 V230.8" stroke="#ffffff" stroke-width="1.1" fill="none"/><path d="M136.3 112.3 V230.8" stroke="#9a9a9a" stroke-width="0.6" stroke-dasharray="3 1.4" fill="none"/><path d="M151.3 112.3 V230.8" stroke="#ffffff" stroke-width="1.1" fill="none"/><path d="M151.3 112.3 V230.8" stroke="#9a9a9a" stroke-width="0.6" stroke-dasharray="3 1.4" fill="none"/><path d="M165.8 112.3 V230.8" stroke="#ffffff" stroke-width="1.1" fill="none"/><path d="M165.8 112.3 V230.8" stroke="#9a9a9a" stroke-width="0.6" stroke-dasharray="3 1.4" fill="none"/><path d="M45.0 114.3 H166.0" stroke="#ffffff" stroke-width="1.1" fill="none"/><path d="M45.0 114.3 H166.0" stroke="#9a9a9a" stroke-width="0.6" stroke-dasharray="3 1.4" fill="none"/><path d="M45.0 128.6 H166.0" stroke="#ffffff" stroke-width="1.1" fill="none"/><path d="M45.0 128.6 H166.0" stroke="#9a9a9a" stroke-width="0.6" stroke-dasharray="3 1.4" fill="none"/><path d="M45.0 143.1 H166.0" stroke="#ffffff" stroke-width="1.1" fill="none"/><path d="M45.0 143.1 H166.0" stroke="#9a9a9a" stroke-width="0.6" stroke-dasharray="3 1.4" fill="none"/><path d="M45.0 157.2 H166.0" stroke="#ffffff" stroke-width="1.1" fill="none"/><path d="M45.0 157.2 H166.0" stroke="#9a9a9a" stroke-width="0.6" stroke-dasharray="3 1.4" fill="none"/><path d="M45.0 171.6 H166.0" stroke="#ffffff" stroke-width="1.1" fill="none"/><path d="M45.0 171.6 H166.0" stroke="#9a9a9a" stroke-width="0.6" stroke-dasharray="3 1.4" fill="none"/><path d="M45.0 186 H166.0" stroke="#ffffff" stroke-width="1.1" fill="none"/><path d="M45.0 186 H166.0" stroke="#9a9a9a" stroke-width="0.6" stroke-dasharray="3 1.4" fill="none"/><path d="M45.0 200.6 H166.0" stroke="#ffffff" stroke-width="1.1" fill="none"/><path d="M45.0 200.6 H166.0" stroke="#9a9a9a" stroke-width="0.6" stroke-dasharray="3 1.4" fill="none"/><path d="M45.0 215.2 H166.0" stroke="#ffffff" stroke-width="1.1" fill="none"/><path d="M45.0 215.2 H166.0" stroke="#9a9a9a" stroke-width="0.6" stroke-dasharray="3 1.4" fill="none"/><path d="M45.0 229.6 H166.0" stroke="#ffffff" stroke-width="1.1" fill="none"/><path d="M45.0 229.6 H166.0" stroke="#9a9a9a" stroke-width="0.6" stroke-dasharray="3 1.4" fill="none"/><rect x="76.3" y="146.0" width="0.85" height="0.85" fill="#2424f4"/><rect x="76.5" y="141.5" width="0.85" height="0.85" fill="#2424f4"/><rect x="72.9" y="142.0" width="0.85" height="0.85" fill="#2424f4"/><rect x="83.2" y="145.5" width="0.85" height="0.85" fill="#2424f4"/><rect x="82.8" y="144.5" width="0.85" height="0.85" fill="#2424f4"/><rect x="79.6" y="144.2" width="0.85" height="0.85" fill="#2424f4"/><rect x="69.3" y="147.8" width="0.85" height="0.85" fill="#2424f4"/><rect x="80.1" y="145.9" width="0.85" height="0.85" fill="#2424f4"/><rect x="69.1" y="133.8" width="0.85" height="0.85" fill="#2424f4"/><rect x="73.2" y="140.7" width="0.85" height="0.85" fill="#2424f4"/><rect x="79.1" y="143.0" width="0.85" height="0.85" fill="#2424f4"/><rect x="80.2" y="139.7" width="0.85" height="0.85" fill="#2424f4"/><rect x="79.1" y="145.3" width="0.85" height="0.85" fill="#2424f4"/><rect x="74.3" y="152.5" width="0.85" height="0.85" fill="#2424f4"/><rect x="80.4" y="149.7" width="0.85" height="0.85" fill="#2424f4"/><rect x="74.5" y="139.2" width="0.85" height="0.85" fill="#2424f4"/><rect x="75.9" y="142.6" width="0.85" height="0.85" fill="#2424f4"/><rect x="80.8" y="144.5" width="0.85" height="0.85" fill="#2424f4"/><rect x="75.4" y="138.0" width="0.85" height="0.85" fill="#2424f4"/><rect x="75.0" y="149.8" width="0.85" height="0.85" fill="#2424f4"/><rect x="73.6" y="144.5" width="0.85" height="0.85" fill="#2424f4"/><rect x="79.7" y="135.2" width="0.85" height="0.85" fill="#2424f4"/><rect x="77.8" y="150.3" width="0.85" height="0.85" fill="#2424f4"/><rect x="67.5" y="141.5" width="0.85" height="0.85" fill="#2424f4"/><rect x="77.1" y="138.8" width="0.85" height="0.85" fill="#2424f4"/><rect x="80.1" y="142.9" width="0.85" height="0.85" fill="#2424f4"/><rect x="70.3" y="147.7" width="0.85" height="0.85" fill="#2424f4"/><rect x="80.9" y="148.3" width="0.85" height="0.85" fill="#2424f4"/><rect x="84.8" y="145.2" width="0.85" height="0.85" fill="#2424f4"/><rect x="78.2" y="136.2" width="0.85" height="0.85" fill="#2424f4"/><rect x="80.7" y="139.9" width="0.85" height="0.85" fill="#2424f4"/><rect x="75.3" y="136.4" width="0.85" height="0.85" fill="#2424f4"/><rect x="72.8" y="140.3" width="0.85" height="0.85" fill="#2424f4"/><rect x="84.0" y="132.2" width="0.85" height="0.85" fill="#2424f4"/><rect x="70.3" y="144.5" width="0.85" height="0.85" fill="#2424f4"/><rect x="84.8" y="146.3" width="0.85" height="0.85" fill="#2424f4"/><rect x="68.1" y="129.6" width="0.85" height="0.85" fill="#2424f4"/><rect x="79.4" y="139.2" width="0.85" height="0.85" fill="#2424f4"/><rect x="72.0" y="148.5" width="0.85" height="0.85" fill="#2424f4"/><rect x="83.1" y="144.0" width="0.85" height="0.85" fill="#2424f4"/><rect x="78.8" y="145.5" width="0.85" height="0.85" fill="#2424f4"/><rect x="85.6" y="146.5" width="0.85" height="0.85" fill="#2424f4"/><rect x="80.2" y="146.2" width="0.85" height="0.85" fill="#2424f4"/><rect x="69.8" y="150.1" width="0.85" height="0.85" fill="#2424f4"/><rect x="82.4" y="146.1" width="0.85" height="0.85" fill="#2424f4"/><rect x="67.7" y="139.8" width="0.85" height="0.85" fill="#2424f4"/><rect x="81.8" y="133.4" width="0.85" height="0.85" fill="#2424f4"/><rect x="76.7" y="148.7" width="0.85" height="0.85" fill="#2424f4"/><rect x="71.0" y="151.9" width="0.85" height="0.85" fill="#2424f4"/><rect x="80.4" y="142.4" width="0.85" height="0.85" fill="#2424f4"/><rect x="79.2" y="146.7" width="0.85" height="0.85" fill="#2424f4"/><rect x="78.2" y="149.4" width="0.85" height="0.85" fill="#2424f4"/><rect x="74.3" y="141.0" width="0.85" height="0.85" fill="#2424f4"/><rect x="82.8" y="143.3" width="0.85" height="0.85" fill="#2424f4"/><rect x="73.2" y="148.3" width="0.85" height="0.85" fill="#2424f4"/><rect x="84.9" y="140.8" width="0.85" height="0.85" fill="#2424f4"/><rect x="70.7" y="142.5" width="0.85" height="0.85" fill="#2424f4"/><rect x="76.9" y="141.6" width="0.85" height="0.85" fill="#2424f4"/><rect x="84.6" y="137.7" width="0.85" height="0.85" fill="#2424f4"/><rect x="83.9" y="136.4" width="0.85" height="0.85" fill="#2424f4"/><rect x="73.7" y="146.6" width="0.85" height="0.85" fill="#2424f4"/><rect x="83.2" y="147.8" width="0.85" height="0.85" fill="#2424f4"/><rect x="79.3" y="144.0" width="0.85" height="0.85" fill="#2424f4"/><rect x="78.4" y="146.3" width="0.85" height="0.85" fill="#2424f4"/><rect x="76.7" y="144.7" width="0.85" height="0.85" fill="#2424f4"/><rect x="80.5" y="143.2" width="0.85" height="0.85" fill="#2424f4"/><rect x="81.4" y="146.3" width="0.85" height="0.85" fill="#2424f4"/><rect x="87.7" y="145.0" width="0.85" height="0.85" fill="#2424f4"/><rect x="75.5" y="141.2" width="0.85" height="0.85" fill="#2424f4"/><rect x="77.5" y="148.2" width="0.85" height="0.85" fill="#2424f4"/><rect x="75.9" y="145.3" width="0.85" height="0.85" fill="#2424f4"/><rect x="86.8" y="129.4" width="0.85" height="0.85" fill="#2424f4"/><rect x="72.0" y="144.5" width="0.85" height="0.85" fill="#2424f4"/><rect x="79.6" y="144.5" width="0.85" height="0.85" fill="#2424f4"/><rect x="75.4" y="146.7" width="0.85" height="0.85" fill="#2424f4"/><rect x="79.0" y="140.4" width="0.85" height="0.85" fill="#2424f4"/><rect x="89.8" y="145.1" width="0.85" height="0.85" fill="#2424f4"/><rect x="74.8" y="142.7" width="0.85" height="0.85" fill="#2424f4"/><rect x="76.5" y="142.9" width="0.85" height="0.85" fill="#2424f4"/><rect x="64.0" y="140.6" width="0.85" height="0.85" fill="#2424f4"/><rect x="82.6" y="136.9" width="0.85" height="0.85" fill="#2424f4"/><rect x="77.3" y="148.3" width="0.85" height="0.85" fill="#2424f4"/><rect x="81.9" y="151.3" width="0.85" height="0.85" fill="#2424f4"/><rect x="69.1" y="141.3" width="0.85" height="0.85" fill="#2424f4"/><rect x="75.9" y="146.6" width="0.85" height="0.85" fill="#2424f4"/><rect x="83.1" y="128.7" width="0.85" height="0.85" fill="#2424f4"/><rect x="83.0" y="135.4" width="0.85" height="0.85" fill="#2424f4"/><rect x="81.0" y="135.1" width="0.85" height="0.85" fill="#2424f4"/><rect x="78.5" y="149.7" width="0.85" height="0.85" fill="#2424f4"/><rect x="76.9" y="144.2" width="0.85" height="0.85" fill="#2424f4"/><rect x="81.6" y="144.0" width="0.85" height="0.85" fill="#2424f4"/><rect x="77.2" y="151.5" width="0.85" height="0.85" fill="#2424f4"/><rect x="82.8" y="141.6" width="0.85" height="0.85" fill="#2424f4"/><rect x="91.3" y="137.0" width="0.85" height="0.85" fill="#2424f4"/><rect x="82.2" y="141.8" width="0.85" height="0.85" fill="#2424f4"/><rect x="78.3" y="147.0" width="0.85" height="0.85" fill="#2424f4"/><rect x="78.7" y="146.6" width="0.85" height="0.85" fill="#2424f4"/><rect x="70.0" y="135.0" width="0.85" height="0.85" fill="#2424f4"/><rect x="80.7" y="138.0" width="0.85" height="0.85" fill="#2424f4"/><rect x="72.5" y="135.3" width="0.85" height="0.85" fill="#2424f4"/><rect x="83.9" y="147.2" width="0.85" height="0.85" fill="#2424f4"/><rect x="85.0" y="138.1" width="0.85" height="0.85" fill="#2424f4"/><rect x="77.6" y="137.0" width="0.85" height="0.85" fill="#2424f4"/><rect x="81.4" y="151.8" width="0.85" height="0.85" fill="#2424f4"/><rect x="73.1" y="151.6" width="0.85" height="0.85" fill="#2424f4"/><rect x="82.5" y="142.2" width="0.85" height="0.85" fill="#2424f4"/><rect x="67.7" y="150.8" width="0.85" height="0.85" fill="#2424f4"/><rect x="77.1" y="139.9" width="0.85" height="0.85" fill="#2424f4"/><rect x="79.6" y="145.4" width="0.85" height="0.85" fill="#2424f4"/><rect x="85.1" y="137.7" width="0.85" height="0.85" fill="#2424f4"/><rect x="83.3" y="151.2" width="0.85" height="0.85" fill="#2424f4"/><rect x="84.9" y="142.2" width="0.85" height="0.85" fill="#2424f4"/><rect x="73.9" y="148.7" width="0.85" height="0.85" fill="#2424f4"/><rect x="78.2" y="143.9" width="0.85" height="0.85" fill="#2424f4"/><rect x="84.7" y="141.8" width="0.85" height="0.85" fill="#2424f4"/><rect x="66.1" y="141.1" width="0.85" height="0.85" fill="#2424f4"/><rect x="68.3" y="147.6" width="0.85" height="0.85" fill="#2424f4"/><rect x="79.2" y="139.9" width="0.85" height="0.85" fill="#2424f4"/><rect x="77.6" y="147.7" width="0.85" height="0.85" fill="#2424f4"/><rect x="78.0" y="150.4" width="0.85" height="0.85" fill="#2424f4"/><rect x="77.3" y="148.8" width="0.85" height="0.85" fill="#2424f4"/><rect x="85.1" y="151.9" width="0.85" height="0.85" fill="#2424f4"/><rect x="74.2" y="148.0" width="0.85" height="0.85" fill="#2424f4"/><rect x="68.2" y="137.3" width="0.85" height="0.85" fill="#2424f4"/><rect x="67.8" y="149.0" width="0.85" height="0.85" fill="#2424f4"/><rect x="128.2" y="143.7" width="0.85" height="0.85" fill="#2424f4"/><rect x="133.4" y="143.6" width="0.85" height="0.85" fill="#2424f4"/><rect x="131.4" y="145.1" width="0.85" height="0.85" fill="#2424f4"/><rect x="143.4" y="144.0" width="0.85" height="0.85" fill="#2424f4"/><rect x="137.1" y="149.2" width="0.85" height="0.85" fill="#2424f4"/><rect x="133.4" y="137.0" width="0.85" height="0.85" fill="#2424f4"/><rect x="131.6" y="149.6" width="0.85" height="0.85" fill="#2424f4"/><rect x="126.2" y="140.6" width="0.85" height="0.85" fill="#2424f4"/><rect x="139.4" y="148.1" width="0.85" height="0.85" fill="#2424f4"/><rect x="134.4" y="148.1" width="0.85" height="0.85" fill="#2424f4"/><rect x="135.2" y="137.4" width="0.85" height="0.85" fill="#2424f4"/><rect x="126.6" y="140.3" width="0.85" height="0.85" fill="#2424f4"/><rect x="139.0" y="140.7" width="0.85" height="0.85" fill="#2424f4"/><rect x="129.9" y="139.6" width="0.85" height="0.85" fill="#2424f4"/><rect x="126.7" y="143.2" width="0.85" height="0.85" fill="#2424f4"/><rect x="128.5" y="145.8" width="0.85" height="0.85" fill="#2424f4"/><rect x="122.6" y="145.6" width="0.85" height="0.85" fill="#2424f4"/><rect x="131.2" y="133.3" width="0.85" height="0.85" fill="#2424f4"/><rect x="138.0" y="142.3" width="0.85" height="0.85" fill="#2424f4"/><rect x="123.2" y="139.1" width="0.85" height="0.85" fill="#2424f4"/><rect x="135.9" y="141.3" width="0.85" height="0.85" fill="#2424f4"/><rect x="138.3" y="147.8" width="0.85" height="0.85" fill="#2424f4"/><rect x="137.7" y="145.6" width="0.85" height="0.85" fill="#2424f4"/><rect x="141.1" y="147.4" width="0.85" height="0.85" fill="#2424f4"/><rect x="136.7" y="132.5" width="0.85" height="0.85" fill="#2424f4"/><rect x="138.9" y="150.9" width="0.85" height="0.85" fill="#2424f4"/><rect x="132.9" y="141.3" width="0.85" height="0.85" fill="#2424f4"/><rect x="144.1" y="134.3" width="0.85" height="0.85" fill="#2424f4"/><rect x="136.7" y="156.9" width="0.85" height="0.85" fill="#2424f4"/><rect x="129.8" y="147.5" width="0.85" height="0.85" fill="#2424f4"/><rect x="143.8" y="143.2" width="0.85" height="0.85" fill="#2424f4"/><rect x="137.2" y="148.7" width="0.85" height="0.85" fill="#2424f4"/><rect x="129.9" y="143.3" width="0.85" height="0.85" fill="#2424f4"/><rect x="135.9" y="148.3" width="0.85" height="0.85" fill="#2424f4"/><rect x="134.2" y="142.7" width="0.85" height="0.85" fill="#2424f4"/><rect x="129.3" y="141.9" width="0.85" height="0.85" fill="#2424f4"/><rect x="138.9" y="144.3" width="0.85" height="0.85" fill="#2424f4"/><rect x="130.1" y="139.3" width="0.85" height="0.85" fill="#2424f4"/><rect x="147.7" y="150.0" width="0.85" height="0.85" fill="#2424f4"/><rect x="137.6" y="129.8" width="0.85" height="0.85" fill="#2424f4"/><rect x="137.5" y="146.4" width="0.85" height="0.85" fill="#2424f4"/><rect x="142.8" y="146.1" width="0.85" height="0.85" fill="#2424f4"/><rect x="134.1" y="146.6" width="0.85" height="0.85" fill="#2424f4"/><rect x="124.7" y="149.4" width="0.85" height="0.85" fill="#2424f4"/><rect x="136.0" y="140.0" width="0.85" height="0.85" fill="#2424f4"/><rect x="141.0" y="153.6" width="0.85" height="0.85" fill="#2424f4"/><rect x="127.4" y="140.2" width="0.85" height="0.85" fill="#2424f4"/><rect x="135.9" y="144.8" width="0.85" height="0.85" fill="#2424f4"/><rect x="132.4" y="138.5" width="0.85" height="0.85" fill="#2424f4"/><rect x="145.0" y="149.4" width="0.85" height="0.85" fill="#2424f4"/><rect x="128.4" y="136.5" width="0.85" height="0.85" fill="#2424f4"/><rect x="142.9" y="149.1" width="0.85" height="0.85" fill="#2424f4"/><rect x="143.5" y="148.2" width="0.85" height="0.85" fill="#2424f4"/><rect x="130.0" y="145.2" width="0.85" height="0.85" fill="#2424f4"/><rect x="123.6" y="139.8" width="0.85" height="0.85" fill="#2424f4"/><rect x="134.1" y="146.6" width="0.85" height="0.85" fill="#2424f4"/><rect x="130.8" y="143.1" width="0.85" height="0.85" fill="#2424f4"/><rect x="136.7" y="145.8" width="0.85" height="0.85" fill="#2424f4"/><rect x="137.6" y="144.9" width="0.85" height="0.85" fill="#2424f4"/><rect x="132.8" y="148.1" width="0.85" height="0.85" fill="#2424f4"/><rect x="134.6" y="139.3" width="0.85" height="0.85" fill="#2424f4"/><rect x="131.3" y="143.8" width="0.85" height="0.85" fill="#2424f4"/><rect x="133.9" y="144.6" width="0.85" height="0.85" fill="#2424f4"/><rect x="134.4" y="144.7" width="0.85" height="0.85" fill="#2424f4"/><rect x="133.7" y="137.0" width="0.85" height="0.85" fill="#2424f4"/><rect x="136.5" y="149.5" width="0.85" height="0.85" fill="#2424f4"/><rect x="136.6" y="142.8" width="0.85" height="0.85" fill="#2424f4"/><rect x="136.6" y="138.6" width="0.85" height="0.85" fill="#2424f4"/><rect x="124.9" y="144.1" width="0.85" height="0.85" fill="#2424f4"/><rect x="129.7" y="147.8" width="0.85" height="0.85" fill="#2424f4"/><rect x="129.0" y="129.6" width="0.85" height="0.85" fill="#2424f4"/><rect x="129.2" y="152.3" width="0.85" height="0.85" fill="#2424f4"/><rect x="132.5" y="136.4" width="0.85" height="0.85" fill="#2424f4"/><rect x="130.6" y="146.6" width="0.85" height="0.85" fill="#2424f4"/><rect x="136.9" y="144.8" width="0.85" height="0.85" fill="#2424f4"/><rect x="141.8" y="147.6" width="0.85" height="0.85" fill="#2424f4"/><rect x="134.3" y="147.0" width="0.85" height="0.85" fill="#2424f4"/><rect x="142.7" y="149.0" width="0.85" height="0.85" fill="#2424f4"/><rect x="139.5" y="138.0" width="0.85" height="0.85" fill="#2424f4"/><rect x="133.7" y="147.7" width="0.85" height="0.85" fill="#2424f4"/><rect x="132.9" y="149.6" width="0.85" height="0.85" fill="#2424f4"/><rect x="137.4" y="148.7" width="0.85" height="0.85" fill="#2424f4"/><rect x="133.3" y="157.6" width="0.85" height="0.85" fill="#2424f4"/><rect x="140.6" y="142.6" width="0.85" height="0.85" fill="#2424f4"/><rect x="134.9" y="157.8" width="0.85" height="0.85" fill="#2424f4"/><rect x="132.7" y="148.5" width="0.85" height="0.85" fill="#2424f4"/><rect x="139.3" y="143.8" width="0.85" height="0.85" fill="#2424f4"/><rect x="128.6" y="144.8" width="0.85" height="0.85" fill="#2424f4"/><rect x="136.2" y="149.9" width="0.85" height="0.85" fill="#2424f4"/><rect x="138.3" y="143.9" width="0.85" height="0.85" fill="#2424f4"/><rect x="138.7" y="146.7" width="0.85" height="0.85" fill="#2424f4"/><rect x="135.4" y="144.1" width="0.85" height="0.85" fill="#2424f4"/><rect x="133.2" y="147.5" width="0.85" height="0.85" fill="#2424f4"/><rect x="129.1" y="140.4" width="0.85" height="0.85" fill="#2424f4"/><rect x="134.4" y="135.9" width="0.85" height="0.85" fill="#2424f4"/><rect x="132.2" y="133.0" width="0.85" height="0.85" fill="#2424f4"/><rect x="131.0" y="146.9" width="0.85" height="0.85" fill="#2424f4"/><rect x="137.2" y="143.5" width="0.85" height="0.85" fill="#2424f4"/><rect x="133.2" y="136.1" width="0.85" height="0.85" fill="#2424f4"/><rect x="143.5" y="146.6" width="0.85" height="0.85" fill="#2424f4"/><rect x="139.9" y="139.0" width="0.85" height="0.85" fill="#2424f4"/><rect x="133.5" y="134.0" width="0.85" height="0.85" fill="#2424f4"/><rect x="138.3" y="148.8" width="0.85" height="0.85" fill="#2424f4"/><rect x="124.9" y="143.5" width="0.85" height="0.85" fill="#2424f4"/><rect x="137.6" y="134.3" width="0.85" height="0.85" fill="#2424f4"/><rect x="125.3" y="138.0" width="0.85" height="0.85" fill="#2424f4"/><rect x="131.3" y="136.2" width="0.85" height="0.85" fill="#2424f4"/><rect x="134.6" y="145.1" width="0.85" height="0.85" fill="#2424f4"/><rect x="137.6" y="147.6" width="0.85" height="0.85" fill="#2424f4"/><rect x="141.9" y="150.1" width="0.85" height="0.85" fill="#2424f4"/><rect x="127.8" y="141.1" width="0.85" height="0.85" fill="#2424f4"/><rect x="129.1" y="138.0" width="0.85" height="0.85" fill="#2424f4"/><rect x="134.0" y="143.8" width="0.85" height="0.85" fill="#2424f4"/><rect x="136.9" y="135.2" width="0.85" height="0.85" fill="#2424f4"/><rect x="128.2" y="143.7" width="0.85" height="0.85" fill="#2424f4"/><rect x="133.4" y="142.1" width="0.85" height="0.85" fill="#2424f4"/><rect x="134.1" y="139.7" width="0.85" height="0.85" fill="#2424f4"/><rect x="137.9" y="145.7" width="0.85" height="0.85" fill="#2424f4"/><rect x="134.0" y="140.2" width="0.85" height="0.85" fill="#2424f4"/><rect x="133.5" y="129.1" width="0.85" height="0.85" fill="#2424f4"/><rect x="129.5" y="144.0" width="0.85" height="0.85" fill="#2424f4"/><rect x="126.9" y="144.9" width="0.85" height="0.85" fill="#2424f4"/><rect x="135.1" y="136.4" width="0.85" height="0.85" fill="#2424f4"/><rect x="133.1" y="142.1" width="0.85" height="0.85" fill="#2424f4"/><rect x="136.7" y="147.1" width="0.85" height="0.85" fill="#2424f4"/><rect x="77.6" y="194.8" width="0.85" height="0.85" fill="#2424f4"/><rect x="77.1" y="199.0" width="0.85" height="0.85" fill="#2424f4"/><rect x="81.5" y="201.0" width="0.85" height="0.85" fill="#2424f4"/><rect x="74.2" y="192.1" width="0.85" height="0.85" fill="#2424f4"/><rect x="75.9" y="195.4" width="0.85" height="0.85" fill="#2424f4"/><rect x="72.2" y="198.8" width="0.85" height="0.85" fill="#2424f4"/><rect x="75.3" y="200.0" width="0.85" height="0.85" fill="#2424f4"/><rect x="80.4" y="197.2" width="0.85" height="0.85" fill="#2424f4"/><rect x="89.4" y="197.7" width="0.85" height="0.85" fill="#2424f4"/><rect x="83.3" y="200.1" width="0.85" height="0.85" fill="#2424f4"/><rect x="83.4" y="186.6" width="0.85" height="0.85" fill="#2424f4"/><rect x="74.0" y="200.7" width="0.85" height="0.85" fill="#2424f4"/><rect x="80.8" y="212.0" width="0.85" height="0.85" fill="#2424f4"/><rect x="79.4" y="206.3" width="0.85" height="0.85" fill="#2424f4"/><rect x="81.6" y="204.5" width="0.85" height="0.85" fill="#2424f4"/><rect x="80.4" y="198.6" width="0.85" height="0.85" fill="#2424f4"/><rect x="80.3" y="193.6" width="0.85" height="0.85" fill="#2424f4"/><rect x="83.7" y="193.9" width="0.85" height="0.85" fill="#2424f4"/><rect x="79.0" y="210.9" width="0.85" height="0.85" fill="#2424f4"/><rect x="76.7" y="199.5" width="0.85" height="0.85" fill="#2424f4"/><rect x="83.6" y="199.5" width="0.85" height="0.85" fill="#2424f4"/><rect x="73.8" y="200.8" width="0.85" height="0.85" fill="#2424f4"/><rect x="80.7" y="203.2" width="0.85" height="0.85" fill="#2424f4"/><rect x="73.9" y="208.9" width="0.85" height="0.85" fill="#2424f4"/><rect x="86.1" y="199.5" width="0.85" height="0.85" fill="#2424f4"/><rect x="79.1" y="197.1" width="0.85" height="0.85" fill="#2424f4"/><rect x="84.9" y="195.6" width="0.85" height="0.85" fill="#2424f4"/><rect x="81.2" y="196.8" width="0.85" height="0.85" fill="#2424f4"/><rect x="74.3" y="203.3" width="0.85" height="0.85" fill="#2424f4"/><rect x="84.5" y="199.3" width="0.85" height="0.85" fill="#2424f4"/><rect x="74.4" y="203.8" width="0.85" height="0.85" fill="#2424f4"/><rect x="77.6" y="201.1" width="0.85" height="0.85" fill="#2424f4"/><rect x="85.4" y="205.5" width="0.85" height="0.85" fill="#2424f4"/><rect x="75.2" y="211.7" width="0.85" height="0.85" fill="#2424f4"/><rect x="77.8" y="203.6" width="0.85" height="0.85" fill="#2424f4"/><rect x="74.6" y="199.2" width="0.85" height="0.85" fill="#2424f4"/><rect x="69.1" y="209.0" width="0.85" height="0.85" fill="#2424f4"/><rect x="84.6" y="192.8" width="0.85" height="0.85" fill="#2424f4"/><rect x="70.3" y="190.6" width="0.85" height="0.85" fill="#2424f4"/><rect x="83.7" y="196.9" width="0.85" height="0.85" fill="#2424f4"/><rect x="77.5" y="197.7" width="0.85" height="0.85" fill="#2424f4"/><rect x="77.2" y="193.5" width="0.85" height="0.85" fill="#2424f4"/><rect x="77.9" y="191.6" width="0.85" height="0.85" fill="#2424f4"/><rect x="77.4" y="201.1" width="0.85" height="0.85" fill="#2424f4"/><rect x="80.1" y="198.1" width="0.85" height="0.85" fill="#2424f4"/><rect x="73.3" y="200.3" width="0.85" height="0.85" fill="#2424f4"/><rect x="75.4" y="207.9" width="0.85" height="0.85" fill="#2424f4"/><rect x="81.6" y="198.8" width="0.85" height="0.85" fill="#2424f4"/><rect x="75.4" y="195.6" width="0.85" height="0.85" fill="#2424f4"/><rect x="73.1" y="197.5" width="0.85" height="0.85" fill="#2424f4"/><rect x="79.3" y="202.2" width="0.85" height="0.85" fill="#2424f4"/><rect x="80.6" y="210.7" width="0.85" height="0.85" fill="#2424f4"/><rect x="74.3" y="199.5" width="0.85" height="0.85" fill="#2424f4"/><rect x="91.8" y="189.3" width="0.85" height="0.85" fill="#2424f4"/><rect x="75.2" y="200.3" width="0.85" height="0.85" fill="#2424f4"/><rect x="78.6" y="201.6" width="0.85" height="0.85" fill="#2424f4"/><rect x="76.6" y="201.4" width="0.85" height="0.85" fill="#2424f4"/><rect x="78.1" y="203.6" width="0.85" height="0.85" fill="#2424f4"/><rect x="68.3" y="194.6" width="0.85" height="0.85" fill="#2424f4"/><rect x="77.8" y="193.8" width="0.85" height="0.85" fill="#2424f4"/><rect x="72.6" y="202.8" width="0.85" height="0.85" fill="#2424f4"/><rect x="74.6" y="202.8" width="0.85" height="0.85" fill="#2424f4"/><rect x="81.5" y="201.1" width="0.85" height="0.85" fill="#2424f4"/><rect x="80.3" y="198.8" width="0.85" height="0.85" fill="#2424f4"/><rect x="70.8" y="199.2" width="0.85" height="0.85" fill="#2424f4"/><rect x="80.1" y="196.5" width="0.85" height="0.85" fill="#2424f4"/><rect x="77.3" y="203.4" width="0.85" height="0.85" fill="#2424f4"/><rect x="73.4" y="202.9" width="0.85" height="0.85" fill="#2424f4"/><rect x="87.1" y="196.4" width="0.85" height="0.85" fill="#2424f4"/><rect x="78.5" y="198.6" width="0.85" height="0.85" fill="#2424f4"/><rect x="85.5" y="201.1" width="0.85" height="0.85" fill="#2424f4"/><rect x="82.3" y="195.7" width="0.85" height="0.85" fill="#2424f4"/><rect x="77.7" y="199.3" width="0.85" height="0.85" fill="#2424f4"/><rect x="68.9" y="207.2" width="0.85" height="0.85" fill="#2424f4"/><rect x="82.3" y="190.0" width="0.85" height="0.85" fill="#2424f4"/><rect x="81.5" y="198.7" width="0.85" height="0.85" fill="#2424f4"/><rect x="80.0" y="201.4" width="0.85" height="0.85" fill="#2424f4"/><rect x="70.3" y="198.3" width="0.85" height="0.85" fill="#2424f4"/><rect x="85.3" y="196.3" width="0.85" height="0.85" fill="#2424f4"/><rect x="72.7" y="192.1" width="0.85" height="0.85" fill="#2424f4"/><rect x="71.7" y="201.2" width="0.85" height="0.85" fill="#2424f4"/><rect x="86.3" y="201.7" width="0.85" height="0.85" fill="#2424f4"/><rect x="79.0" y="211.5" width="0.85" height="0.85" fill="#2424f4"/><rect x="75.2" y="195.8" width="0.85" height="0.85" fill="#2424f4"/><rect x="80.4" y="202.4" width="0.85" height="0.85" fill="#2424f4"/><rect x="72.7" y="193.1" width="0.85" height="0.85" fill="#2424f4"/><rect x="79.3" y="200.7" width="0.85" height="0.85" fill="#2424f4"/><rect x="71.3" y="198.3" width="0.85" height="0.85" fill="#2424f4"/><rect x="75.1" y="201.9" width="0.85" height="0.85" fill="#2424f4"/><rect x="77.2" y="198.9" width="0.85" height="0.85" fill="#2424f4"/><rect x="76.0" y="205.1" width="0.85" height="0.85" fill="#2424f4"/><rect x="84.8" y="197.4" width="0.85" height="0.85" fill="#2424f4"/><rect x="82.0" y="195.3" width="0.85" height="0.85" fill="#2424f4"/><rect x="78.2" y="203.4" width="0.85" height="0.85" fill="#2424f4"/><rect x="85.4" y="197.3" width="0.85" height="0.85" fill="#2424f4"/><rect x="77.4" y="200.5" width="0.85" height="0.85" fill="#2424f4"/><rect x="70.3" y="199.5" width="0.85" height="0.85" fill="#2424f4"/><rect x="74.4" y="201.4" width="0.85" height="0.85" fill="#2424f4"/><rect x="72.2" y="188.7" width="0.85" height="0.85" fill="#2424f4"/><rect x="78.0" y="200.8" width="0.85" height="0.85" fill="#2424f4"/><rect x="75.1" y="204.2" width="0.85" height="0.85" fill="#2424f4"/><rect x="76.4" y="196.1" width="0.85" height="0.85" fill="#2424f4"/><rect x="80.2" y="190.9" width="0.85" height="0.85" fill="#2424f4"/><rect x="74.4" y="199.3" width="0.85" height="0.85" fill="#2424f4"/><rect x="82.0" y="198.5" width="0.85" height="0.85" fill="#2424f4"/><rect x="79.3" y="195.9" width="0.85" height="0.85" fill="#2424f4"/><rect x="79.3" y="208.4" width="0.85" height="0.85" fill="#2424f4"/><rect x="74.4" y="212.2" width="0.85" height="0.85" fill="#2424f4"/><rect x="74.6" y="199.5" width="0.85" height="0.85" fill="#2424f4"/><rect x="78.7" y="204.9" width="0.85" height="0.85" fill="#2424f4"/><rect x="71.6" y="188.1" width="0.85" height="0.85" fill="#2424f4"/><rect x="80.8" y="203.7" width="0.85" height="0.85" fill="#2424f4"/><rect x="80.9" y="213.6" width="0.85" height="0.85" fill="#2424f4"/><rect x="78.8" y="200.8" width="0.85" height="0.85" fill="#2424f4"/><rect x="82.4" y="201.4" width="0.85" height="0.85" fill="#2424f4"/><rect x="86.1" y="192.7" width="0.85" height="0.85" fill="#2424f4"/><rect x="75.9" y="180.8" width="0.85" height="0.85" fill="#2424f4"/><rect x="81.9" y="197.4" width="0.85" height="0.85" fill="#2424f4"/><rect x="82.4" y="211.0" width="0.85" height="0.85" fill="#2424f4"/><rect x="77.8" y="198.0" width="0.85" height="0.85" fill="#2424f4"/><rect x="75.3" y="194.9" width="0.85" height="0.85" fill="#2424f4"/><rect x="74.6" y="202.9" width="0.85" height="0.85" fill="#2424f4"/><rect x="78.0" y="199.8" width="0.85" height="0.85" fill="#2424f4"/><rect x="76.9" y="204.3" width="0.85" height="0.85" fill="#2424f4"/><rect x="80.3" y="198.6" width="0.85" height="0.85" fill="#2424f4"/><rect x="138.3" y="199.4" width="0.85" height="0.85" fill="#2424f4"/><rect x="129.2" y="208.1" width="0.85" height="0.85" fill="#2424f4"/><rect x="137.3" y="195.0" width="0.85" height="0.85" fill="#2424f4"/><rect x="140.4" y="202.1" width="0.85" height="0.85" fill="#2424f4"/><rect x="127.2" y="208.9" width="0.85" height="0.85" fill="#2424f4"/><rect x="136.7" y="205.0" width="0.85" height="0.85" fill="#2424f4"/><rect x="136.0" y="199.4" width="0.85" height="0.85" fill="#2424f4"/><rect x="127.3" y="205.4" width="0.85" height="0.85" fill="#2424f4"/><rect x="135.2" y="198.7" width="0.85" height="0.85" fill="#2424f4"/><rect x="136.8" y="200.6" width="0.85" height="0.85" fill="#2424f4"/><rect x="138.4" y="198.2" width="0.85" height="0.85" fill="#2424f4"/><rect x="134.8" y="188.6" width="0.85" height="0.85" fill="#2424f4"/><rect x="132.9" y="203.8" width="0.85" height="0.85" fill="#2424f4"/><rect x="141.7" y="198.2" width="0.85" height="0.85" fill="#2424f4"/><rect x="134.4" y="208.8" width="0.85" height="0.85" fill="#2424f4"/><rect x="133.4" y="204.2" width="0.85" height="0.85" fill="#2424f4"/><rect x="143.4" y="200.4" width="0.85" height="0.85" fill="#2424f4"/><rect x="141.1" y="196.4" width="0.85" height="0.85" fill="#2424f4"/><rect x="136.0" y="199.8" width="0.85" height="0.85" fill="#2424f4"/><rect x="135.6" y="206.3" width="0.85" height="0.85" fill="#2424f4"/><rect x="146.9" y="196.6" width="0.85" height="0.85" fill="#2424f4"/><rect x="132.1" y="202.9" width="0.85" height="0.85" fill="#2424f4"/><rect x="129.7" y="202.9" width="0.85" height="0.85" fill="#2424f4"/><rect x="137.9" y="198.7" width="0.85" height="0.85" fill="#2424f4"/><rect x="137.7" y="191.8" width="0.85" height="0.85" fill="#2424f4"/><rect x="138.8" y="191.9" width="0.85" height="0.85" fill="#2424f4"/><rect x="131.5" y="197.2" width="0.85" height="0.85" fill="#2424f4"/><rect x="133.0" y="204.8" width="0.85" height="0.85" fill="#2424f4"/><rect x="135.4" y="198.1" width="0.85" height="0.85" fill="#2424f4"/><rect x="137.7" y="208.7" width="0.85" height="0.85" fill="#2424f4"/><rect x="135.0" y="202.2" width="0.85" height="0.85" fill="#2424f4"/><rect x="141.2" y="201.6" width="0.85" height="0.85" fill="#2424f4"/><rect x="128.6" y="213.6" width="0.85" height="0.85" fill="#2424f4"/><rect x="146.0" y="189.5" width="0.85" height="0.85" fill="#2424f4"/><rect x="134.8" y="202.5" width="0.85" height="0.85" fill="#2424f4"/><rect x="139.8" y="203.8" width="0.85" height="0.85" fill="#2424f4"/><rect x="133.6" y="194.5" width="0.85" height="0.85" fill="#2424f4"/><rect x="135.5" y="205.8" width="0.85" height="0.85" fill="#2424f4"/><rect x="129.6" y="194.7" width="0.85" height="0.85" fill="#2424f4"/><rect x="134.9" y="189.7" width="0.85" height="0.85" fill="#2424f4"/><rect x="133.7" y="197.8" width="0.85" height="0.85" fill="#2424f4"/><rect x="137.3" y="196.4" width="0.85" height="0.85" fill="#2424f4"/><rect x="130.6" y="198.1" width="0.85" height="0.85" fill="#2424f4"/><rect x="134.8" y="196.6" width="0.85" height="0.85" fill="#2424f4"/><rect x="135.1" y="204.3" width="0.85" height="0.85" fill="#2424f4"/><rect x="140.9" y="209.4" width="0.85" height="0.85" fill="#2424f4"/><rect x="131.1" y="197.9" width="0.85" height="0.85" fill="#2424f4"/><rect x="122.6" y="210.5" width="0.85" height="0.85" fill="#2424f4"/><rect x="131.4" y="200.0" width="0.85" height="0.85" fill="#2424f4"/><rect x="137.6" y="192.9" width="0.85" height="0.85" fill="#2424f4"/><rect x="137.3" y="200.1" width="0.85" height="0.85" fill="#2424f4"/><rect x="125.9" y="201.8" width="0.85" height="0.85" fill="#2424f4"/><rect x="141.0" y="190.1" width="0.85" height="0.85" fill="#2424f4"/><rect x="139.0" y="201.3" width="0.85" height="0.85" fill="#2424f4"/><rect x="137.4" y="202.6" width="0.85" height="0.85" fill="#2424f4"/><rect x="141.5" y="199.0" width="0.85" height="0.85" fill="#2424f4"/><rect x="139.4" y="198.0" width="0.85" height="0.85" fill="#2424f4"/><rect x="138.6" y="195.8" width="0.85" height="0.85" fill="#2424f4"/><rect x="134.5" y="209.5" width="0.85" height="0.85" fill="#2424f4"/><rect x="137.2" y="199.3" width="0.85" height="0.85" fill="#2424f4"/><rect x="129.3" y="195.9" width="0.85" height="0.85" fill="#2424f4"/><rect x="136.0" y="205.3" width="0.85" height="0.85" fill="#2424f4"/><rect x="137.1" y="203.0" width="0.85" height="0.85" fill="#2424f4"/><rect x="134.8" y="207.5" width="0.85" height="0.85" fill="#2424f4"/><rect x="133.0" y="197.2" width="0.85" height="0.85" fill="#2424f4"/><rect x="139.4" y="200.5" width="0.85" height="0.85" fill="#2424f4"/><rect x="133.6" y="197.1" width="0.85" height="0.85" fill="#2424f4"/><rect x="133.7" y="203.6" width="0.85" height="0.85" fill="#2424f4"/><rect x="136.8" y="193.7" width="0.85" height="0.85" fill="#2424f4"/><rect x="137.1" y="201.2" width="0.85" height="0.85" fill="#2424f4"/><rect x="130.0" y="204.4" width="0.85" height="0.85" fill="#2424f4"/><rect x="133.6" y="198.4" width="0.85" height="0.85" fill="#2424f4"/><rect x="139.0" y="207.3" width="0.85" height="0.85" fill="#2424f4"/><rect x="131.6" y="202.6" width="0.85" height="0.85" fill="#2424f4"/><rect x="130.6" y="212.7" width="0.85" height="0.85" fill="#2424f4"/><rect x="132.5" y="206.7" width="0.85" height="0.85" fill="#2424f4"/><rect x="131.8" y="204.6" width="0.85" height="0.85" fill="#2424f4"/><rect x="146.1" y="186.5" width="0.85" height="0.85" fill="#2424f4"/><rect x="132.8" y="202.9" width="0.85" height="0.85" fill="#2424f4"/><rect x="134.5" y="196.6" width="0.85" height="0.85" fill="#2424f4"/><rect x="145.8" y="200.6" width="0.85" height="0.85" fill="#2424f4"/><rect x="126.8" y="204.8" width="0.85" height="0.85" fill="#2424f4"/><rect x="126.4" y="206.4" width="0.85" height="0.85" fill="#2424f4"/><rect x="132.1" y="201.0" width="0.85" height="0.85" fill="#2424f4"/><rect x="141.3" y="200.8" width="0.85" height="0.85" fill="#2424f4"/><rect x="128.0" y="191.0" width="0.85" height="0.85" fill="#2424f4"/><rect x="140.9" y="204.2" width="0.85" height="0.85" fill="#2424f4"/><rect x="130.9" y="204.8" width="0.85" height="0.85" fill="#2424f4"/><rect x="137.5" y="203.7" width="0.85" height="0.85" fill="#2424f4"/><rect x="123.7" y="198.6" width="0.85" height="0.85" fill="#2424f4"/><rect x="139.5" y="204.2" width="0.85" height="0.85" fill="#2424f4"/><rect x="139.4" y="186.9" width="0.85" height="0.85" fill="#2424f4"/><rect x="135.8" y="202.9" width="0.85" height="0.85" fill="#2424f4"/><rect x="147.8" y="195.0" width="0.85" height="0.85" fill="#2424f4"/><rect x="133.4" y="200.4" width="0.85" height="0.85" fill="#2424f4"/><rect x="139.4" y="197.8" width="0.85" height="0.85" fill="#2424f4"/><rect x="140.7" y="195.9" width="0.85" height="0.85" fill="#2424f4"/><rect x="136.3" y="197.4" width="0.85" height="0.85" fill="#2424f4"/><rect x="135.8" y="196.5" width="0.85" height="0.85" fill="#2424f4"/><rect x="127.0" y="206.1" width="0.85" height="0.85" fill="#2424f4"/><rect x="136.5" y="197.2" width="0.85" height="0.85" fill="#2424f4"/><rect x="136.0" y="205.5" width="0.85" height="0.85" fill="#2424f4"/><rect x="130.1" y="199.6" width="0.85" height="0.85" fill="#2424f4"/><rect x="137.7" y="203.0" width="0.85" height="0.85" fill="#2424f4"/><rect x="133.3" y="188.8" width="0.85" height="0.85" fill="#2424f4"/><rect x="141.2" y="202.0" width="0.85" height="0.85" fill="#2424f4"/><rect x="135.1" y="198.7" width="0.85" height="0.85" fill="#2424f4"/><rect x="136.3" y="197.9" width="0.85" height="0.85" fill="#2424f4"/><rect x="129.9" y="196.2" width="0.85" height="0.85" fill="#2424f4"/><rect x="132.0" y="196.9" width="0.85" height="0.85" fill="#2424f4"/><rect x="129.2" y="203.6" width="0.85" height="0.85" fill="#2424f4"/><rect x="128.5" y="203.8" width="0.85" height="0.85" fill="#2424f4"/><rect x="129.9" y="202.1" width="0.85" height="0.85" fill="#2424f4"/><rect x="141.9" y="201.3" width="0.85" height="0.85" fill="#2424f4"/><rect x="131.3" y="200.5" width="0.85" height="0.85" fill="#2424f4"/><rect x="135.7" y="190.8" width="0.85" height="0.85" fill="#2424f4"/><rect x="132.0" y="201.1" width="0.85" height="0.85" fill="#2424f4"/><rect x="132.7" y="200.6" width="0.85" height="0.85" fill="#2424f4"/><rect x="138.7" y="204.3" width="0.85" height="0.85" fill="#2424f4"/><rect x="139.5" y="203.4" width="0.85" height="0.85" fill="#2424f4"/><rect x="133.6" y="200.1" width="0.85" height="0.85" fill="#2424f4"/><rect x="133.6" y="198.5" width="0.85" height="0.85" fill="#2424f4"/><rect x="134.1" y="190.9" width="0.85" height="0.85" fill="#2424f4"/><rect x="133.3" y="200.1" width="0.85" height="0.85" fill="#2424f4"/><rect x="130.1" y="200.1" width="0.85" height="0.85" fill="#2424f4"/></svg>
<div style="left:175.70px;top:90.00px;width:91.00px;height:71.20px;border:0.5px solid #dcdcdc;"></div>
<div style="left:177.00px;top:88.00px;width:42.00px;height:4.00px;background:#f0f0f0;"></div>
<span class="t" style="top:88px;font-size:4.6px;line-height:5.52px;color:#000;letter-spacing:-0.024px;left:178.00px;">Параметры поиска</span>
<span class="t" style="top:97px;font-size:4.6px;line-height:5.52px;color:#000;letter-spacing:-0.007px;left:197.00px;">Частота</span>
<div style="left:216.00px;top:95.00px;width:48.30px;height:7.80px;background:#fff;border:0.5px solid #cfcfcf;"></div>
<div style="left:258.40px;top:95.60px;width:5.40px;height:6.60px;background:#e6e6e6;border:0.4px solid #b4b4b4;"></div>
<svg style="left:259.6px;top:95.8px;" width="3" height="6.199999999999999" viewBox="0 0 3 6.199999999999999"><path d="M0.3 2.60 L1.5 1.10 L2.7 2.60 Z" fill="#333"/><path d="M0.3 3.60 L1.5 5.10 L2.7 3.60 Z" fill="#333"/></svg>
<span class="t" style="top:97px;font-size:4.6px;line-height:5.52px;color:#000;letter-spacing:0.028px;left:217.80px;">11544,000 МГц</span>
<span class="t" style="top:106px;font-size:4.6px;line-height:5.52px;color:#000;letter-spacing:0.016px;left:177.50px;">Диапазон поиска</span>
<div style="left:216.00px;top:104.60px;width:48.30px;height:7.80px;background:#f2f2f2;border:0.5px solid #d0d0d0;"></div>
<div style="left:258.40px;top:105.20px;width:5.40px;height:6.60px;background:#e6e6e6;border:0.4px solid #b4b4b4;"></div>
<svg style="left:259.6px;top:105.39999999999999px;" width="3" height="6.199999999999999" viewBox="0 0 3 6.199999999999999"><path d="M0.3 2.60 L1.5 1.10 L2.7 2.60 Z" fill="#a0a0a0"/><path d="M0.3 3.60 L1.5 5.10 L2.7 3.60 Z" fill="#a0a0a0"/></svg>
<span class="t" style="top:106px;font-size:4.6px;line-height:5.52px;color:#a0a0a0;left:217.80px;">2 МГц</span>
<span class="t" style="top:116px;font-size:4.6px;line-height:5.52px;color:#000;letter-spacing:-0.084px;left:186.50px;">Поляризация</span>
<div style="left:216.00px;top:114.20px;width:48.30px;height:7.80px;background:#e3e3e3;border:0.5px solid #cfcfcf;"></div>
<span class="t" style="top:116px;font-size:4.6px;line-height:5.52px;color:#000;left:218.00px;">В/П</span>
<svg style="left:258.70000000000005px;top:116.89999999999999px;" width="4.4" height="3" viewBox="0 0 4.4 3"><path d="M0.3 0.4 H3.9 L2.1 2.5 Z" fill="#222"/></svg>
<span class="t" style="top:126px;font-size:4.6px;line-height:5.52px;color:#000;letter-spacing:-0.028px;left:181.50px;">Симв. скорость</span>
<div style="left:216.00px;top:123.90px;width:48.30px;height:7.80px;background:#ffffff;border:0.5px solid #9c9c9c;"></div>
<span class="t" style="top:126px;font-size:4.6px;line-height:5.52px;color:#000;left:218.00px;">45000</span>
<svg style="left:258.90000000000003px;top:126.3px;" width="4" height="3" viewBox="0 0 4 3"><path d="M0.5 0.7 L2 2.2 L3.5 0.7" fill="none" stroke="#222" stroke-width="0.5"/></svg>
<span class="t" style="top:135px;font-size:4.6px;line-height:5.52px;color:#000;letter-spacing:-0.050px;left:181.00px;">Search standard</span>
<div style="left:216.00px;top:133.50px;width:48.30px;height:7.80px;background:#e3e3e3;border:0.5px solid #cfcfcf;"></div>
<span class="t" style="top:135px;font-size:4.6px;line-height:5.52px;color:#000;left:218.00px;">AUTO</span>
<svg style="left:258.70000000000005px;top:136.20000000000002px;" width="4.4" height="3" viewBox="0 0 4.4 3"><path d="M0.3 0.4 H3.9 L2.1 2.5 Z" fill="#222"/></svg>
<span class="t" style="top:145px;font-size:4.6px;line-height:5.52px;color:#000;letter-spacing:-0.151px;left:179.00px;">PL Scramble code</span>
<div style="left:216.00px;top:143.10px;width:23.30px;height:7.80px;background:#e3e3e3;border:0.5px solid #cfcfcf;"></div>
<span class="t" style="top:145px;font-size:4.6px;line-height:5.52px;color:#000;left:218.00px;">Root</span>
<svg style="left:233.70000000000002px;top:145.8px;" width="4.4" height="3" viewBox="0 0 4.4 3"><path d="M0.3 0.4 H3.9 L2.1 2.5 Z" fill="#222"/></svg>
<div style="left:240.50px;top:143.10px;width:23.80px;height:7.80px;background:#fff;border:0.5px solid #cfcfcf;"></div>
<div style="left:258.40px;top:143.70px;width:5.40px;height:6.60px;background:#e6e6e6;border:0.4px solid #b4b4b4;"></div>
<svg style="left:259.6px;top:143.9px;" width="3" height="6.199999999999999" viewBox="0 0 3 6.199999999999999"><path d="M0.3 2.60 L1.5 1.10 L2.7 2.60 Z" fill="#333"/><path d="M0.3 3.60 L1.5 5.10 L2.7 3.60 Z" fill="#333"/></svg>
<span class="t" style="top:145px;font-size:4.6px;line-height:5.52px;color:#000;left:242.30px;">1</span>
<div style="left:216.50px;top:153.80px;width:5.20px;height:5.20px;background:#fff;border:0.5px solid #8c8c8c;"></div>
<span class="t" style="top:154px;font-size:4.6px;line-height:5.52px;color:#000;letter-spacing:-0.044px;left:223.60px;">Поиск PLS-кода</span>
<div style="left:177.30px;top:166.70px;width:5.20px;height:5.20px;background:#fff;border:0.5px solid #8c8c8c;"></div>
<span class="t" style="top:167px;font-size:4.6px;line-height:5.52px;color:#000;letter-spacing:-0.033px;left:185.00px;">Слепой поиск</span>
<span class="t" style="top:176px;font-size:4.6px;line-height:5.52px;color:#000;letter-spacing:-0.040px;left:177.30px;">Размер точки</span>
<div style="left:210.60px;top:174.20px;width:17.00px;height:7.40px;background:#fff;border:0.5px solid #cfcfcf;"></div>
<div style="left:221.70px;top:174.80px;width:5.40px;height:6.20px;background:#e6e6e6;border:0.4px solid #b4b4b4;"></div>
<svg style="left:222.9px;top:175.0px;" width="3" height="5.800000000000001" viewBox="0 0 3 5.800000000000001"><path d="M0.3 2.40 L1.5 0.90 L2.7 2.40 Z" fill="#333"/><path d="M0.3 3.40 L1.5 4.90 L2.7 3.40 Z" fill="#333"/></svg>
<span class="t" style="top:176px;font-size:4.6px;line-height:5.52px;color:#000;left:212.40px;">2</span>
<div style="left:246.20px;top:163.00px;width:19.20px;height:19.20px;background:#fbfbfb;border:0.5px solid #c8c8c8;border-radius:1px;"></div>
<svg style="left:246.2px;top:163px;" width="19.2" height="19.2" viewBox="0 0 19.2 19.2"><defs><radialGradient id="dg" cx="40%" cy="35%" r="70%"><stop offset="0" stop-color="#efefef"/><stop offset="0.6" stop-color="#bdbdbd"/><stop offset="1" stop-color="#8f8f8f"/></radialGradient></defs><circle cx="9.6" cy="9.6" r="9.1" fill="url(#dg)"/><path d="M4.5 9 Q7 5.5 11 6.2 Q14.5 7 14 10.5 Q12.5 14 8.5 13.5 Q5 12.5 4.5 9 Z" fill="none" stroke="#6e6e6e" stroke-width="0.7"/><path d="M6.5 10.5 L9 8 L11.5 11 M8 12 L12.5 8.5" stroke="#7c7c7c" stroke-width="0.6" fill="none"/></svg>
<div style="left:173.40px;top:185.50px;width:92.00px;height:42.10px;border:0.5px solid #dcdcdc;"></div>
<div style="left:176.30px;top:183.50px;width:38.70px;height:4.00px;background:#f0f0f0;"></div>
<span class="t" style="top:183px;font-size:4.6px;line-height:5.52px;color:#000;letter-spacing:0.014px;left:177.30px;">Передача потока</span>
<span class="t" style="top:189px;font-size:4.6px;line-height:5.52px;color:#a3a3a3;letter-spacing:-0.005px;left:177.70px;">Протокол</span>
<span class="t" style="top:189px;font-size:4.6px;line-height:5.52px;color:#a3a3a3;letter-spacing:-0.279px;left:208.30px;">IP-адрес:</span>
<span class="t" style="top:189px;font-size:4.6px;line-height:5.52px;color:#a3a3a3;letter-spacing:0.018px;left:244.70px;">Порт</span>
<div style="left:177.70px;top:195.40px;width:20.10px;height:8.20px;background:#cfcfcf;border:0.5px solid #c4c4c4;"></div>
<span class="t" style="top:197px;font-size:4.6px;line-height:5.52px;color:#a3a3a3;left:179.70px;">TCP</span>
<svg style="left:192.4px;top:198.0px;" width="4" height="3" viewBox="0 0 4 3"><path d="M0.5 0.7 L2 2.2 L3.5 0.7" fill="none" stroke="#a3a3a3" stroke-width="0.5"/></svg>
<div style="left:198.70px;top:195.40px;width:40.60px;height:8.20px;background:#cfcfcf;border:0.5px solid #c4c4c4;"></div>
<span class="t" style="top:197px;font-size:4.6px;line-height:5.52px;color:#a3a3a3;left:200.70px;">127.0.0.1</span>
<svg style="left:233.9px;top:198.0px;" width="4" height="3" viewBox="0 0 4 3"><path d="M0.5 0.7 L2 2.2 L3.5 0.7" fill="none" stroke="#a3a3a3" stroke-width="0.5"/></svg>
<div style="left:240.00px;top:195.40px;width:20.00px;height:8.20px;background:#f4f4f4;border:0.5px solid #d6d6d6;"></div>
<div style="left:254.10px;top:196.00px;width:5.40px;height:7.00px;background:#f0f0f0;border:0.4px solid #d8d8d8;"></div>
<svg style="left:255.3px;top:196.20000000000002px;" width="3" height="6.6" viewBox="0 0 3 6.6"><path d="M0.3 2.80 L1.5 1.30 L2.7 2.80 Z" fill="#7a7a7a"/><path d="M0.3 3.80 L1.5 5.30 L2.7 3.80 Z" fill="#7a7a7a"/></svg>
<span class="t" style="top:197px;font-size:4.6px;line-height:5.52px;color:#a3a3a3;left:241.80px;">6970</span>
<div style="left:177.70px;top:208.60px;width:5.20px;height:5.20px;background:#fafafa;border:0.5px solid #c8c8c8;"></div>
<span class="t" style="top:209px;font-size:4.6px;line-height:5.52px;color:#a3a3a3;letter-spacing:-0.024px;left:185.00px;">Поток в файл</span>
<span class="t" style="top:209px;font-size:4.6px;line-height:5.52px;color:#a3a3a3;letter-spacing:-0.125px;left:228.00px;">Размер буфера</span>
<div style="left:177.70px;top:216.00px;width:49.80px;height:8.30px;background:#cfcfcf;border:0.5px solid #c4c4c4;"></div>
<span class="t" style="top:218px;font-size:4.6px;line-height:5.52px;color:#a3a3a3;left:179.70px;">TSReader</span>
<svg style="left:222.10000000000002px;top:218.65px;" width="4" height="3" viewBox="0 0 4 3"><path d="M0.5 0.7 L2 2.2 L3.5 0.7" fill="none" stroke="#a3a3a3" stroke-width="0.5"/></svg>
<div style="left:231.70px;top:216.00px;width:28.30px;height:8.30px;background:#f4f4f4;border:0.5px solid #d6d6d6;"></div>
<div style="left:254.10px;top:216.60px;width:5.40px;height:7.10px;background:#f0f0f0;border:0.4px solid #d8d8d8;"></div>
<svg style="left:255.3px;top:216.8px;" width="3" height="6.700000000000001" viewBox="0 0 3 6.700000000000001"><path d="M0.3 2.85 L1.5 1.35 L2.7 2.85 Z" fill="#7a7a7a"/><path d="M0.3 3.85 L1.5 5.35 L2.7 3.85 Z" fill="#7a7a7a"/></svg>
<span class="t" style="top:218px;font-size:4.6px;line-height:5.52px;color:#a3a3a3;left:233.50px;">100000</span>
<span class="t" style="top:238px;font-size:4.6px;line-height:5.52px;color:#000;letter-spacing:0.034px;left:80.00px;">IQScan point</span>
<div style="left:110.60px;top:237.00px;width:56.40px;height:7.60px;background:#e3e3e3;border:0.5px solid #cfcfcf;"></div>
<span class="t" style="top:239px;font-size:4.6px;line-height:5.52px;color:#000;left:112.60px;">Demod IQ out</span>
<svg style="left:161.4px;top:239.60000000000002px;" width="4.4" height="3" viewBox="0 0 4.4 3"><path d="M0.3 0.4 H3.9 L2.1 2.5 Z" fill="#222"/></svg>
<div style="left:177.50px;top:232.50px;width:64.50px;height:13.00px;background:#f4f4f4;border:0.5px solid #b4b4b4;"></div>
<svg style="left:0px;top:0px;" width="800" height="433" viewBox="0 0 800 433"><path d="M221.2 234.8 H224.6" stroke="#111" stroke-width="1.2" fill="none"/><path d="M225.2 235.3 V238.5" stroke="#111" stroke-width="1.2" fill="none"/><path d="M221.2 238.9 H224.6" stroke="#111" stroke-width="1.2" fill="none"/><path d="M225.2 239.3 V242.5" stroke="#111" stroke-width="1.2" fill="none"/><path d="M221.2 243.0 H224.6" stroke="#111" stroke-width="1.2" fill="none"/><path d="M228.2 234.8 H231.6" stroke="#111" stroke-width="1.2" fill="none"/><path d="M232.2 235.3 V238.5" stroke="#111" stroke-width="1.2" fill="none"/><path d="M232.2 239.3 V242.5" stroke="#111" stroke-width="1.2" fill="none"/><path d="M228.2 243.0 H231.6" stroke="#111" stroke-width="1.2" fill="none"/><path d="M227.6 239.3 V242.5" stroke="#111" stroke-width="1.2" fill="none"/><path d="M227.6 235.3 V238.5" stroke="#111" stroke-width="1.2" fill="none"/><path d="M228.2 238.9 H231.6" stroke="#111" stroke-width="1.2" fill="none"/><path d="M235.2 234.8 H238.6" stroke="#111" stroke-width="1.2" fill="none"/><path d="M239.2 235.3 V238.5" stroke="#111" stroke-width="1.2" fill="none"/><path d="M235.2 238.9 H238.6" stroke="#111" stroke-width="1.2" fill="none"/><path d="M234.6 239.3 V242.5" stroke="#111" stroke-width="1.2" fill="none"/><path d="M235.2 243.0 H238.6" stroke="#111" stroke-width="1.2" fill="none"/></svg>
<div style="left:248.60px;top:232.20px;width:18.00px;height:16.40px;background:#ffffff;border:0.6px solid #7db0e6;"></div>
<svg style="left:248.6px;top:231.6px;" width="18" height="16" viewBox="0 0 18 16"><circle cx="8.3" cy="8.6" r="6" fill="#ffffff" stroke="#e01010" stroke-width="2.1"/><path d="M4.2 4.6 L12.4 12.6" stroke="#e01010" stroke-width="2.1"/></svg>
<div style="left:61.40px;top:248.20px;width:183.60px;height:15.40px;border:0.5px solid #dcdcdc;"></div>
<div style="left:63.00px;top:246.20px;width:34.50px;height:4.00px;background:#f0f0f0;"></div>
<span class="t" style="top:246px;font-size:4.6px;line-height:5.52px;color:#000;letter-spacing:0.258px;left:64.00px;">Modcode filter</span>
<span class="t" style="top:254px;font-size:4.6px;line-height:5.52px;color:#a3a3a3;letter-spacing:-0.132px;left:65.00px;">Modcode</span>
<div style="left:93.50px;top:253.40px;width:92.10px;height:8.20px;background:#cfcfcf;border:0.5px solid #c4c4c4;"></div>
<span class="t" style="top:255px;font-size:4.6px;line-height:5.52px;color:#a3a3a3;left:95.50px;">All</span>
<svg style="left:180.20000000000002px;top:256.0px;" width="4" height="3" viewBox="0 0 4 3"><path d="M0.5 0.7 L2 2.2 L3.5 0.7" fill="none" stroke="#a3a3a3" stroke-width="0.5"/></svg>
<div style="left:190.40px;top:253.40px;width:24.60px;height:8.20px;background:#cfcfcf;border:0.5px solid #c4c4c4;"></div>
<span class="t" style="top:255px;font-size:4.6px;line-height:5.52px;color:#a3a3a3;left:102.70px;width:200px;text-align:center;">Detect</span>
<div style="left:218.60px;top:253.40px;width:22.00px;height:8.20px;background:#f4f4f4;border:0.5px solid #d6d6d6;"></div>
<div style="left:234.70px;top:254.00px;width:5.40px;height:7.00px;background:#f0f0f0;border:0.4px solid #d8d8d8;"></div>
<svg style="left:235.9px;top:254.20000000000002px;" width="3" height="6.6" viewBox="0 0 3 6.6"><path d="M0.3 2.80 L1.5 1.30 L2.7 2.80 Z" fill="#7a7a7a"/><path d="M0.3 3.80 L1.5 5.30 L2.7 3.80 Z" fill="#7a7a7a"/></svg>
<span class="t" style="top:255px;font-size:4.6px;line-height:5.52px;color:#a3a3a3;left:220.40px;">3 сек.</span>
<div style="left:41.00px;top:268.60px;width:225.00px;height:75.80px;border:0.5px solid #dcdcdc;"></div>
<div style="left:42.40px;top:266.60px;width:65.00px;height:4.00px;background:#f0f0f0;"></div>
<span class="t" style="top:266px;font-size:4.6px;line-height:5.52px;color:#000;letter-spacing:0.061px;left:43.40px;">Результаты "слепого" поиска</span>
<span class="t" style="top:275px;font-size:4.6px;line-height:5.52px;color:#000;letter-spacing:0.094px;font-weight:bold;left:45.60px;">RF уровень</span>
<span class="t" style="top:285px;font-size:4.6px;line-height:5.52px;color:#000;letter-spacing:0.497px;font-weight:bold;left:41.80px;">Сигнал/Шум</span>
<span class="t" style="top:296px;font-size:4.6px;line-height:5.52px;color:#000;letter-spacing:0.063px;font-weight:bold;left:65.00px;">BER</span>
<span class="t" style="top:306px;font-size:4.6px;line-height:5.52px;color:#000;letter-spacing:0.404px;font-weight:bold;left:57.50px;">Bitrate</span>
<div style="left:77.00px;top:273.25px;width:39.00px;height:7.90px;background:#fff;border:0.5px solid #cfcfcf;"></div>
<div style="left:110.10px;top:273.85px;width:5.40px;height:6.70px;background:#e6e6e6;border:0.4px solid #b4b4b4;"></div>
<svg style="left:111.3px;top:274.05px;" width="3" height="6.300000000000001" viewBox="0 0 3 6.300000000000001"><path d="M0.3 2.65 L1.5 1.15 L2.7 2.65 Z" fill="#333"/><path d="M0.3 3.65 L1.5 5.15 L2.7 3.65 Z" fill="#333"/></svg>
<span class="t" style="top:274px;font-size:5.6px;line-height:6.72px;color:#2a63ff;letter-spacing:-0.113px;font-weight:bold;left:78.80px;">-38 dBm</span>
<div style="left:77.00px;top:283.65px;width:39.00px;height:7.90px;background:#fff;border:0.5px solid #cfcfcf;"></div>
<div style="left:110.10px;top:284.25px;width:5.40px;height:6.70px;background:#e6e6e6;border:0.4px solid #b4b4b4;"></div>
<svg style="left:111.3px;top:284.45000000000005px;" width="3" height="6.300000000000001" viewBox="0 0 3 6.300000000000001"><path d="M0.3 2.65 L1.5 1.15 L2.7 2.65 Z" fill="#333"/><path d="M0.3 3.65 L1.5 5.15 L2.7 3.65 Z" fill="#333"/></svg>
<span class="t" style="top:284px;font-size:5.6px;line-height:6.72px;color:#1c7c1c;letter-spacing:-0.088px;font-weight:bold;left:78.80px;">14,3 dB</span>
<div style="left:77.00px;top:293.95px;width:39.00px;height:7.90px;background:#fff;border:0.5px solid #cfcfcf;"></div>
<div style="left:110.10px;top:294.55px;width:5.40px;height:6.70px;background:#e6e6e6;border:0.4px solid #b4b4b4;"></div>
<svg style="left:111.3px;top:294.75px;" width="3" height="6.300000000000001" viewBox="0 0 3 6.300000000000001"><path d="M0.3 2.65 L1.5 1.15 L2.7 2.65 Z" fill="#333"/><path d="M0.3 3.65 L1.5 5.15 L2.7 3.65 Z" fill="#333"/></svg>
<span class="t" style="top:295px;font-size:5.6px;line-height:6.72px;color:#f01010;letter-spacing:0.226px;font-weight:bold;left:78.80px;">0,0000000</span>
<div style="left:77.00px;top:304.15px;width:39.00px;height:7.90px;background:#fff;border:0.5px solid #cfcfcf;"></div>
<div style="left:110.10px;top:304.75px;width:5.40px;height:6.70px;background:#e6e6e6;border:0.4px solid #b4b4b4;"></div>
<svg style="left:111.3px;top:304.95000000000005px;" width="3" height="6.300000000000001" viewBox="0 0 3 6.300000000000001"><path d="M0.3 2.65 L1.5 1.15 L2.7 2.65 Z" fill="#333"/><path d="M0.3 3.65 L1.5 5.15 L2.7 3.65 Z" fill="#333"/></svg>
<span class="t" style="top:305px;font-size:5.6px;line-height:6.72px;color:#111;letter-spacing:0.025px;font-weight:bold;left:78.80px;">71,160 Мби</span>
<div style="left:42.40px;top:315.70px;width:5.20px;height:5.20px;background:#fff;border:0.5px solid #8c8c8c;"></div>
<svg style="left:42.4px;top:315.7px;" width="5.2" height="5.2" viewBox="0 0 5.2 5.2"><path d="M1.1 2.7 L2.2 3.8 L4.2 1.3" fill="none" stroke="#222" stroke-width="0.6"/></svg>
<span class="t" style="top:316px;font-size:4.6px;line-height:5.52px;color:#000;letter-spacing:-0.051px;left:49.40px;">Обновлять инфо сигнала</span>
<div style="left:42.40px;top:325.90px;width:5.20px;height:5.20px;background:#fff;border:0.5px solid #8c8c8c;"></div>
<span class="t" style="top:326px;font-size:4.6px;line-height:5.52px;color:#000;letter-spacing:-0.039px;left:49.40px;">Обновлять инфо о модуляции</span>
<span class="t" style="top:336px;font-size:4.6px;line-height:5.52px;color:#000;letter-spacing:-0.044px;left:53.60px;">Выполнено за 0.446 sec</span>
<span class="t" style="top:275px;font-size:4.6px;line-height:5.52px;color:#000;letter-spacing:0.336px;font-weight:bold;left:134.00px;">Частота</span>
<span class="t" style="top:285px;font-size:4.6px;line-height:5.52px;color:#000;letter-spacing:0.018px;font-weight:bold;left:118.40px;">Симв. скорость</span>
<span class="t" style="top:296px;font-size:4.6px;line-height:5.52px;color:#000;letter-spacing:-0.077px;left:131.00px;">Модуляция</span>
<span class="t" style="top:306px;font-size:4.6px;line-height:5.52px;color:#000;letter-spacing:-0.467px;left:146.60px;">FEC</span>
<span class="t" style="top:316px;font-size:4.6px;line-height:5.52px;color:#000;letter-spacing:-0.007px;left:134.00px;">IQ-спектр</span>
<span class="t" style="top:326px;font-size:4.6px;line-height:5.52px;color:#000;letter-spacing:-0.025px;left:140.60px;">RollOff</span>
<span class="t" style="top:336px;font-size:4.6px;line-height:5.52px;color:#000;letter-spacing:-0.032px;left:118.00px;text-decoration:underline;text-decoration-color:#808080;text-decoration-thickness:0.5px;text-underline-offset:0.6px;">Ширина несущей</span>
<div style="left:156.50px;top:273.25px;width:39.00px;height:7.90px;background:#fff;border:0.5px solid #cfcfcf;"></div>
<div style="left:189.60px;top:273.85px;width:5.40px;height:6.70px;background:#e6e6e6;border:0.4px solid #b4b4b4;"></div>
<svg style="left:190.8px;top:274.05px;" width="3" height="6.300000000000001" viewBox="0 0 3 6.300000000000001"><path d="M0.3 2.65 L1.5 1.15 L2.7 2.65 Z" fill="#333"/><path d="M0.3 3.65 L1.5 5.15 L2.7 3.65 Z" fill="#333"/></svg>
<span class="t" style="top:274px;font-size:5.4px;line-height:6.48px;color:#000;letter-spacing:-0.290px;font-weight:bold;left:158.30px;">11543,589 МГ</span>
<div style="left:156.50px;top:283.65px;width:39.00px;height:7.90px;background:#fff;border:0.5px solid #cfcfcf;"></div>
<div style="left:189.60px;top:284.25px;width:5.40px;height:6.70px;background:#e6e6e6;border:0.4px solid #b4b4b4;"></div>
<svg style="left:190.8px;top:284.45000000000005px;" width="3" height="6.300000000000001" viewBox="0 0 3 6.300000000000001"><path d="M0.3 2.65 L1.5 1.15 L2.7 2.65 Z" fill="#333"/><path d="M0.3 3.65 L1.5 5.15 L2.7 3.65 Z" fill="#333"/></svg>
<span class="t" style="top:284px;font-size:5.4px;line-height:6.48px;color:#000;letter-spacing:-0.218px;font-weight:bold;left:158.30px;">44990 Кс</span>
<div style="left:156.50px;top:293.95px;width:39.00px;height:7.90px;background:#e3e3e3;border:0.5px solid #cfcfcf;"></div>
<span class="t" style="top:296px;font-size:4.6px;line-height:5.52px;color:#222;left:158.50px;">DVBS2/QPSK</span>
<svg style="left:189.9px;top:296.7px;" width="4.4" height="3" viewBox="0 0 4.4 3"><path d="M0.3 0.4 H3.9 L2.1 2.5 Z" fill="#222"/></svg>
<div style="left:156.50px;top:304.15px;width:39.00px;height:7.90px;background:#e3e3e3;border:0.5px solid #cfcfcf;"></div>
<span class="t" style="top:306px;font-size:4.6px;line-height:5.52px;color:#222;left:158.50px;">4/5</span>
<svg style="left:189.9px;top:306.90000000000003px;" width="4.4" height="3" viewBox="0 0 4.4 3"><path d="M0.3 0.4 H3.9 L2.1 2.5 Z" fill="#222"/></svg>
<div style="left:156.50px;top:314.35px;width:39.00px;height:7.90px;background:#e3e3e3;border:0.5px solid #cfcfcf;"></div>
<span class="t" style="top:316px;font-size:4.6px;line-height:5.52px;color:#222;left:158.50px;">Инверсия</span>
<svg style="left:189.9px;top:317.1px;" width="4.4" height="3" viewBox="0 0 4.4 3"><path d="M0.3 0.4 H3.9 L2.1 2.5 Z" fill="#222"/></svg>
<div style="left:156.50px;top:324.55px;width:39.00px;height:7.90px;background:#e3e3e3;border:0.5px solid #cfcfcf;"></div>
<span class="t" style="top:326px;font-size:4.6px;line-height:5.52px;color:#222;left:158.50px;">0.20</span>
<svg style="left:189.9px;top:327.3px;" width="4.4" height="3" viewBox="0 0 4.4 3"><path d="M0.3 0.4 H3.9 L2.1 2.5 Z" fill="#222"/></svg>
<div style="left:156.50px;top:334.55px;width:39.00px;height:7.90px;background:#fff;border:0.5px solid #cfcfcf;"></div>
<div style="left:189.60px;top:335.15px;width:5.40px;height:6.70px;background:#e6e6e6;border:0.4px solid #b4b4b4;"></div>
<svg style="left:190.8px;top:335.35px;" width="3" height="6.300000000000001" viewBox="0 0 3 6.300000000000001"><path d="M0.3 2.65 L1.5 1.15 L2.7 2.65 Z" fill="#333"/><path d="M0.3 3.65 L1.5 5.15 L2.7 3.65 Z" fill="#333"/></svg>
<span class="t" style="top:336px;font-size:4.6px;line-height:5.52px;color:#555;left:158.30px;">53,988 МГц</span>
<span class="t" style="top:275px;font-size:4.6px;line-height:5.52px;color:#000;letter-spacing:-0.055px;left:216.70px;">Пилот</span>
<div style="left:231.70px;top:273.25px;width:32.10px;height:7.90px;background:#e3e3e3;border:0.5px solid #cfcfcf;"></div>
<span class="t" style="top:275px;font-size:4.6px;line-height:5.52px;color:#222;left:233.70px;">Выкл.</span>
<svg style="left:258.20000000000005px;top:276.0px;" width="4.4" height="3" viewBox="0 0 4.4 3"><path d="M0.3 0.4 H3.9 L2.1 2.5 Z" fill="#222"/></svg>
<span class="t" style="top:285px;font-size:4.6px;line-height:5.52px;color:#000;letter-spacing:-0.124px;left:204.70px;">Тип фрейма</span>
<div style="left:231.70px;top:283.65px;width:32.10px;height:7.90px;background:#e3e3e3;border:0.5px solid #cfcfcf;"></div>
<span class="t" style="top:285px;font-size:4.6px;line-height:5.52px;color:#222;left:233.70px;">Длинный</span>
<svg style="left:258.20000000000005px;top:286.40000000000003px;" width="4.4" height="3" viewBox="0 0 4.4 3"><path d="M0.3 0.4 H3.9 L2.1 2.5 Z" fill="#222"/></svg>
<span class="t" style="top:296px;font-size:4.6px;line-height:5.52px;color:#000;letter-spacing:0.038px;left:204.00px;">Режим кода</span>
<div style="left:231.70px;top:293.95px;width:32.10px;height:7.90px;background:#e3e3e3;border:0.5px solid #cfcfcf;"></div>
<span class="t" style="top:296px;font-size:4.6px;line-height:5.52px;color:#222;left:233.70px;">CCM</span>
<svg style="left:258.20000000000005px;top:296.7px;" width="4.4" height="3" viewBox="0 0 4.4 3"><path d="M0.3 0.4 H3.9 L2.1 2.5 Z" fill="#222"/></svg>
<span class="t" style="top:306px;font-size:4.6px;line-height:5.52px;color:#000;letter-spacing:0.082px;left:205.60px;">Тип потока</span>
<div style="left:231.70px;top:304.15px;width:32.10px;height:7.90px;background:#e3e3e3;border:0.5px solid #cfcfcf;"></div>
<span class="t" style="top:306px;font-size:4.6px;line-height:5.52px;color:#222;left:233.70px;">Transport</span>
<svg style="left:258.20000000000005px;top:306.90000000000003px;" width="4.4" height="3" viewBox="0 0 4.4 3"><path d="M0.3 0.4 H3.9 L2.1 2.5 Z" fill="#222"/></svg>
<span class="t" style="top:316px;font-size:4.6px;line-height:5.52px;color:#000;letter-spacing:0.052px;left:198.00px;">Входной поток</span>
<div style="left:231.70px;top:314.35px;width:32.10px;height:7.90px;background:#e3e3e3;border:0.5px solid #cfcfcf;"></div>
<span class="t" style="top:316px;font-size:4.6px;line-height:5.52px;color:#222;left:233.70px;">Single</span>
<svg style="left:258.20000000000005px;top:317.1px;" width="4.4" height="3" viewBox="0 0 4.4 3"><path d="M0.3 0.4 H3.9 L2.1 2.5 Z" fill="#222"/></svg>
<span class="t" style="top:326px;font-size:4.6px;line-height:5.52px;color:#000;letter-spacing:-0.192px;left:218.80px;">ISSYI</span>
<div style="left:231.70px;top:324.55px;width:32.10px;height:7.90px;background:#e3e3e3;border:0.5px solid #cfcfcf;"></div>
<span class="t" style="top:326px;font-size:4.6px;line-height:5.52px;color:#222;left:233.70px;">Выкл.</span>
<svg style="left:258.20000000000005px;top:327.3px;" width="4.4" height="3" viewBox="0 0 4.4 3"><path d="M0.3 0.4 H3.9 L2.1 2.5 Z" fill="#222"/></svg>
<span class="t" style="top:336px;font-size:4.6px;line-height:5.52px;color:#000;letter-spacing:-0.937px;left:222.70px;">NPD</span>
<div style="left:231.70px;top:334.55px;width:32.10px;height:7.90px;background:#e3e3e3;border:0.5px solid #cfcfcf;"></div>
<span class="t" style="top:336px;font-size:4.6px;line-height:5.52px;color:#222;left:233.70px;">Выкл.</span>
<svg style="left:258.20000000000005px;top:337.3px;" width="4.4" height="3" viewBox="0 0 4.4 3"><path d="M0.3 0.4 H3.9 L2.1 2.5 Z" fill="#222"/></svg>
<div style="left:389.60px;top:31.60px;width:420.40px;height:341.00px;background:#f0f0f0;border:0.5px solid #b0b0b0;box-shadow:0 1px 6px rgba(0,0,0,0.42);"></div>
<div style="left:390.10px;top:32.10px;width:420.00px;height:20.30px;background:#ffffff;"></div>
<div style="left:393.00px;top:34.30px;width:7.00px;height:6.70px;background:#1c1c5a;"></div>
<span class="t" style="top:37px;font-size:2.6px;line-height:3.12px;color:#e8e8ff;font-weight:bold;left:296.50px;width:200px;text-align:center;">DVB</span>
<span class="t" style="top:35px;font-size:5px;line-height:6.00px;color:#1a1a1a;letter-spacing:-0.124px;left:402.00px;">Default -- TSReader Professional 2.8.48</span>
<span class="t" style="top:45px;font-size:5px;line-height:6.00px;color:#111;letter-spacing:-0.064px;left:393.00px;">File</span>
<span class="t" style="top:45px;font-size:5px;line-height:6.00px;color:#111;letter-spacing:-0.042px;left:406.00px;">Export</span>
<span class="t" style="top:45px;font-size:5px;line-height:6.00px;color:#111;letter-spacing:-0.112px;left:426.20px;">View</span>
<span class="t" style="top:45px;font-size:5px;line-height:6.00px;color:#111;letter-spacing:-0.136px;left:442.70px;">Record</span>
<span class="t" style="top:45px;font-size:5px;line-height:6.00px;color:#111;letter-spacing:-0.161px;left:464.00px;">Playback</span>
<span class="t" style="top:45px;font-size:5px;line-height:6.00px;color:#111;letter-spacing:-0.019px;left:488.80px;">Forward</span>
<span class="t" style="top:45px;font-size:5px;line-height:6.00px;color:#111;letter-spacing:-0.014px;left:513.00px;">Plugins</span>
<span class="t" style="top:45px;font-size:5px;line-height:6.00px;color:#111;letter-spacing:-0.071px;left:535.00px;">Settings</span>
<span class="t" style="top:45px;font-size:5px;line-height:6.00px;color:#111;letter-spacing:0.054px;left:558.30px;">Help</span>
<div style="left:391.30px;top:52.60px;width:98.40px;height:240.00px;background:#ffffff;border:0.5px solid #828790;"></div>
<div style="left:483.00px;top:53.10px;width:6.20px;height:239.00px;background:#f0f0f0;"></div>
<div style="left:483.00px;top:61.50px;width:6.20px;height:196.00px;background:#cdcdcd;"></div>
<svg style="left:483px;top:54px;" width="6.2" height="5" viewBox="0 0 6.2 5"><path d="M1.6 3.4 L3.1 1.9 L4.6 3.4" fill="none" stroke="#606060" stroke-width="0.55"/></svg>
<svg style="left:483px;top:286.5px;" width="6.2" height="5" viewBox="0 0 6.2 5"><path d="M1.6 1.6 L3.1 3.1 L4.6 1.6" fill="none" stroke="#606060" stroke-width="0.55"/></svg>
<svg style="left:0px;top:0px;" width="800" height="433" viewBox="0 0 800 433"><path d="M395 59.2 V191.7" stroke="#b0b0b0" stroke-width="0.4" stroke-dasharray="0.5 0.5"/><path d="M403.3 60.7 V169.2" stroke="#b0b0b0" stroke-width="0.4" stroke-dasharray="0.5 0.5"/><path d="M403.3 195.7 V289.2" stroke="#b0b0b0" stroke-width="0.4" stroke-dasharray="0.5 0.5"/><path d="M395.0 56.70 H400.0" stroke="#b0b0b0" stroke-width="0.4" stroke-dasharray="0.5 0.5"/><rect x="393.10" y="54.80" width="3.8" height="3.8" fill="#fff" stroke="#8c9ab0" stroke-width="0.45"/><path d="M393.90 56.70 H396.10" stroke="#3a4a8a" stroke-width="0.45"/><rect x="400.00" y="53.90" width="5.8" height="5.6" rx="0.9" fill="#63b35f"/><rect x="400.60" y="53.90" width="5.2" height="1.2" rx="0.5" fill="#8ed38a"/><rect x="400.30" y="55.20" width="3.7" height="3.6" fill="#2e2a0a"/><rect x="400.90" y="56.20" width="2.0" height="1.7" fill="#e4dc24"/><rect x="400.60" y="59.20" width="4.8" height="0.6" fill="#3c6a3a"/><path d="M403.3 64.20 H408.0" stroke="#b0b0b0" stroke-width="0.4" stroke-dasharray="0.5 0.5"/><rect x="408.00" y="61.40" width="5.8" height="5.6" rx="0.9" fill="#63b35f"/><rect x="408.60" y="61.40" width="5.2" height="1.2" rx="0.5" fill="#8ed38a"/><rect x="408.30" y="62.70" width="3.7" height="3.6" fill="#2e2a0a"/><rect x="408.90" y="63.70" width="2.0" height="1.7" fill="#e4dc24"/><rect x="408.60" y="66.70" width="4.8" height="0.6" fill="#3c6a3a"/><path d="M403.3 71.70 H408.0" stroke="#b0b0b0" stroke-width="0.4" stroke-dasharray="0.5 0.5"/><rect x="401.40" y="69.80" width="3.8" height="3.8" fill="#fff" stroke="#8c9ab0" stroke-width="0.45"/><path d="M402.20 71.70 H404.40" stroke="#3a4a8a" stroke-width="0.45"/><path d="M403.30 70.60 V72.80" stroke="#3a4a8a" stroke-width="0.45"/><rect x="408.00" y="68.90" width="5.8" height="5.6" rx="0.9" fill="#63b35f"/><rect x="408.60" y="68.90" width="5.2" height="1.2" rx="0.5" fill="#8ed38a"/><rect x="408.30" y="70.20" width="3.7" height="3.6" fill="#2e2a0a"/><rect x="408.90" y="71.20" width="2.0" height="1.7" fill="#e4dc24"/><rect x="408.60" y="74.20" width="4.8" height="0.6" fill="#3c6a3a"/><path d="M403.3 79.20 H408.0" stroke="#b0b0b0" stroke-width="0.4" stroke-dasharray="0.5 0.5"/><rect x="401.40" y="77.30" width="3.8" height="3.8" fill="#fff" stroke="#8c9ab0" stroke-width="0.45"/><path d="M402.20 79.20 H404.40" stroke="#3a4a8a" stroke-width="0.45"/><path d="M403.30 78.10 V80.30" stroke="#3a4a8a" stroke-width="0.45"/><rect x="408.00" y="76.40" width="5.8" height="5.6" rx="0.9" fill="#63b35f"/><rect x="408.60" y="76.40" width="5.2" height="1.2" rx="0.5" fill="#8ed38a"/><rect x="408.30" y="77.70" width="3.7" height="3.6" fill="#2e2a0a"/><rect x="408.90" y="78.70" width="2.0" height="1.7" fill="#e4dc24"/><rect x="408.60" y="81.70" width="4.8" height="0.6" fill="#3c6a3a"/><path d="M403.3 86.70 H408.0" stroke="#b0b0b0" stroke-width="0.4" stroke-dasharray="0.5 0.5"/><rect x="401.40" y="84.80" width="3.8" height="3.8" fill="#fff" stroke="#8c9ab0" stroke-width="0.45"/><path d="M402.20 86.70 H404.40" stroke="#3a4a8a" stroke-width="0.45"/><path d="M403.30 85.60 V87.80" stroke="#3a4a8a" stroke-width="0.45"/><rect x="408.00" y="83.90" width="5.8" height="5.6" rx="0.9" fill="#63b35f"/><rect x="408.60" y="83.90" width="5.2" height="1.2" rx="0.5" fill="#8ed38a"/><rect x="408.30" y="85.20" width="3.7" height="3.6" fill="#2e2a0a"/><rect x="408.90" y="86.20" width="2.0" height="1.7" fill="#e4dc24"/><rect x="408.60" y="89.20" width="4.8" height="0.6" fill="#3c6a3a"/><path d="M403.3 94.20 H408.0" stroke="#b0b0b0" stroke-width="0.4" stroke-dasharray="0.5 0.5"/><rect x="401.40" y="92.30" width="3.8" height="3.8" fill="#fff" stroke="#8c9ab0" stroke-width="0.45"/><path d="M402.20 94.20 H404.40" stroke="#3a4a8a" stroke-width="0.45"/><path d="M403.30 93.10 V95.30" stroke="#3a4a8a" stroke-width="0.45"/><rect x="408.00" y="91.40" width="5.8" height="5.6" rx="0.9" fill="#63b35f"/><rect x="408.60" y="91.40" width="5.2" height="1.2" rx="0.5" fill="#8ed38a"/><rect x="408.30" y="92.70" width="3.7" height="3.6" fill="#2e2a0a"/><rect x="408.90" y="93.70" width="2.0" height="1.7" fill="#e4dc24"/><rect x="408.60" y="96.70" width="4.8" height="0.6" fill="#3c6a3a"/><path d="M403.3 101.70 H408.0" stroke="#b0b0b0" stroke-width="0.4" stroke-dasharray="0.5 0.5"/><rect x="401.40" y="99.80" width="3.8" height="3.8" fill="#fff" stroke="#8c9ab0" stroke-width="0.45"/><path d="M402.20 101.70 H404.40" stroke="#3a4a8a" stroke-width="0.45"/><path d="M403.30 100.60 V102.80" stroke="#3a4a8a" stroke-width="0.45"/><rect x="408.00" y="98.90" width="5.8" height="5.6" rx="0.9" fill="#63b35f"/><rect x="408.60" y="98.90" width="5.2" height="1.2" rx="0.5" fill="#8ed38a"/><rect x="408.30" y="100.20" width="3.7" height="3.6" fill="#2e2a0a"/><rect x="408.90" y="101.20" width="2.0" height="1.7" fill="#e4dc24"/><rect x="408.60" y="104.20" width="4.8" height="0.6" fill="#3c6a3a"/><path d="M403.3 109.20 H408.0" stroke="#b0b0b0" stroke-width="0.4" stroke-dasharray="0.5 0.5"/><rect x="401.40" y="107.30" width="3.8" height="3.8" fill="#fff" stroke="#8c9ab0" stroke-width="0.45"/><path d="M402.20 109.20 H404.40" stroke="#3a4a8a" stroke-width="0.45"/><path d="M403.30 108.10 V110.30" stroke="#3a4a8a" stroke-width="0.45"/><rect x="408.00" y="106.40" width="5.8" height="5.6" rx="0.9" fill="#63b35f"/><rect x="408.60" y="106.40" width="5.2" height="1.2" rx="0.5" fill="#8ed38a"/><rect x="408.30" y="107.70" width="3.7" height="3.6" fill="#2e2a0a"/><rect x="408.90" y="108.70" width="2.0" height="1.7" fill="#e4dc24"/><rect x="408.60" y="111.70" width="4.8" height="0.6" fill="#3c6a3a"/><path d="M403.3 116.70 H408.0" stroke="#b0b0b0" stroke-width="0.4" stroke-dasharray="0.5 0.5"/><rect x="401.40" y="114.80" width="3.8" height="3.8" fill="#fff" stroke="#8c9ab0" stroke-width="0.45"/><path d="M402.20 116.70 H404.40" stroke="#3a4a8a" stroke-width="0.45"/><path d="M403.30 115.60 V117.80" stroke="#3a4a8a" stroke-width="0.45"/><rect x="408.00" y="113.90" width="5.8" height="5.6" rx="0.9" fill="#63b35f"/><rect x="408.60" y="113.90" width="5.2" height="1.2" rx="0.5" fill="#8ed38a"/><rect x="408.30" y="115.20" width="3.7" height="3.6" fill="#2e2a0a"/><rect x="408.90" y="116.20" width="2.0" height="1.7" fill="#e4dc24"/><rect x="408.60" y="119.20" width="4.8" height="0.6" fill="#3c6a3a"/><path d="M403.3 124.20 H408.0" stroke="#b0b0b0" stroke-width="0.4" stroke-dasharray="0.5 0.5"/><rect x="401.40" y="122.30" width="3.8" height="3.8" fill="#fff" stroke="#8c9ab0" stroke-width="0.45"/><path d="M402.20 124.20 H404.40" stroke="#3a4a8a" stroke-width="0.45"/><path d="M403.30 123.10 V125.30" stroke="#3a4a8a" stroke-width="0.45"/><rect x="408.00" y="121.40" width="5.8" height="5.6" rx="0.9" fill="#63b35f"/><rect x="408.60" y="121.40" width="5.2" height="1.2" rx="0.5" fill="#8ed38a"/><rect x="408.30" y="122.70" width="3.7" height="3.6" fill="#2e2a0a"/><rect x="408.90" y="123.70" width="2.0" height="1.7" fill="#e4dc24"/><rect x="408.60" y="126.70" width="4.8" height="0.6" fill="#3c6a3a"/><path d="M403.3 131.70 H408.0" stroke="#b0b0b0" stroke-width="0.4" stroke-dasharray="0.5 0.5"/><rect x="401.40" y="129.80" width="3.8" height="3.8" fill="#fff" stroke="#8c9ab0" stroke-width="0.45"/><path d="M402.20 131.70 H404.40" stroke="#3a4a8a" stroke-width="0.45"/><path d="M403.30 130.60 V132.80" stroke="#3a4a8a" stroke-width="0.45"/><rect x="408.00" y="128.90" width="5.8" height="5.6" rx="0.9" fill="#63b35f"/><rect x="408.60" y="128.90" width="5.2" height="1.2" rx="0.5" fill="#8ed38a"/><rect x="408.30" y="130.20" width="3.7" height="3.6" fill="#2e2a0a"/><rect x="408.90" y="131.20" width="2.0" height="1.7" fill="#e4dc24"/><rect x="408.60" y="134.20" width="4.8" height="0.6" fill="#3c6a3a"/><path d="M403.3 139.20 H408.0" stroke="#b0b0b0" stroke-width="0.4" stroke-dasharray="0.5 0.5"/><rect x="401.40" y="137.30" width="3.8" height="3.8" fill="#fff" stroke="#8c9ab0" stroke-width="0.45"/><path d="M402.20 139.20 H404.40" stroke="#3a4a8a" stroke-width="0.45"/><path d="M403.30 138.10 V140.30" stroke="#3a4a8a" stroke-width="0.45"/><rect x="408.00" y="136.40" width="5.8" height="5.6" rx="0.9" fill="#63b35f"/><rect x="408.60" y="136.40" width="5.2" height="1.2" rx="0.5" fill="#8ed38a"/><rect x="408.30" y="137.70" width="3.7" height="3.6" fill="#2e2a0a"/><rect x="408.90" y="138.70" width="2.0" height="1.7" fill="#e4dc24"/><rect x="408.60" y="141.70" width="4.8" height="0.6" fill="#3c6a3a"/><path d="M403.3 146.70 H408.0" stroke="#b0b0b0" stroke-width="0.4" stroke-dasharray="0.5 0.5"/><rect x="401.40" y="144.80" width="3.8" height="3.8" fill="#fff" stroke="#8c9ab0" stroke-width="0.45"/><path d="M402.20 146.70 H404.40" stroke="#3a4a8a" stroke-width="0.45"/><path d="M403.30 145.60 V147.80" stroke="#3a4a8a" stroke-width="0.45"/><rect x="408.00" y="143.90" width="5.8" height="5.6" rx="0.9" fill="#63b35f"/><rect x="408.60" y="143.90" width="5.2" height="1.2" rx="0.5" fill="#8ed38a"/><rect x="408.30" y="145.20" width="3.7" height="3.6" fill="#2e2a0a"/><rect x="408.90" y="146.20" width="2.0" height="1.7" fill="#e4dc24"/><rect x="408.60" y="149.20" width="4.8" height="0.6" fill="#3c6a3a"/><path d="M403.3 154.20 H408.0" stroke="#b0b0b0" stroke-width="0.4" stroke-dasharray="0.5 0.5"/><rect x="401.40" y="152.30" width="3.8" height="3.8" fill="#fff" stroke="#8c9ab0" stroke-width="0.45"/><path d="M402.20 154.20 H404.40" stroke="#3a4a8a" stroke-width="0.45"/><path d="M403.30 153.10 V155.30" stroke="#3a4a8a" stroke-width="0.45"/><rect x="408.00" y="151.40" width="5.8" height="5.6" rx="0.9" fill="#63b35f"/><rect x="408.60" y="151.40" width="5.2" height="1.2" rx="0.5" fill="#8ed38a"/><rect x="408.30" y="152.70" width="3.7" height="3.6" fill="#2e2a0a"/><rect x="408.90" y="153.70" width="2.0" height="1.7" fill="#e4dc24"/><rect x="408.60" y="156.70" width="4.8" height="0.6" fill="#3c6a3a"/><path d="M403.3 161.70 H408.0" stroke="#b0b0b0" stroke-width="0.4" stroke-dasharray="0.5 0.5"/><rect x="401.40" y="159.80" width="3.8" height="3.8" fill="#fff" stroke="#8c9ab0" stroke-width="0.45"/><path d="M402.20 161.70 H404.40" stroke="#3a4a8a" stroke-width="0.45"/><path d="M403.30 160.60 V162.80" stroke="#3a4a8a" stroke-width="0.45"/><rect x="408.00" y="158.90" width="5.8" height="5.6" rx="0.9" fill="#63b35f"/><rect x="408.60" y="158.90" width="5.2" height="1.2" rx="0.5" fill="#8ed38a"/><rect x="408.30" y="160.20" width="3.7" height="3.6" fill="#2e2a0a"/><rect x="408.90" y="161.20" width="2.0" height="1.7" fill="#e4dc24"/><rect x="408.60" y="164.20" width="4.8" height="0.6" fill="#3c6a3a"/><path d="M403.3 169.20 H408.0" stroke="#b0b0b0" stroke-width="0.4" stroke-dasharray="0.5 0.5"/><rect x="401.40" y="167.30" width="3.8" height="3.8" fill="#fff" stroke="#8c9ab0" stroke-width="0.45"/><path d="M402.20 169.20 H404.40" stroke="#3a4a8a" stroke-width="0.45"/><path d="M403.30 168.10 V170.30" stroke="#3a4a8a" stroke-width="0.45"/><rect x="408.00" y="166.40" width="5.8" height="5.6" rx="0.9" fill="#63b35f"/><rect x="408.60" y="166.40" width="5.2" height="1.2" rx="0.5" fill="#8ed38a"/><rect x="408.30" y="167.70" width="3.7" height="3.6" fill="#2e2a0a"/><rect x="408.90" y="168.70" width="2.0" height="1.7" fill="#e4dc24"/><rect x="408.60" y="171.70" width="4.8" height="0.6" fill="#3c6a3a"/><path d="M395.0 176.70 H400.0" stroke="#b0b0b0" stroke-width="0.4" stroke-dasharray="0.5 0.5"/><rect x="393.10" y="174.80" width="3.8" height="3.8" fill="#fff" stroke="#8c9ab0" stroke-width="0.45"/><path d="M393.90 176.70 H396.10" stroke="#3a4a8a" stroke-width="0.45"/><rect x="400.00" y="173.90" width="5.8" height="5.6" rx="0.9" fill="#63b35f"/><rect x="400.60" y="173.90" width="5.2" height="1.2" rx="0.5" fill="#8ed38a"/><rect x="400.30" y="175.20" width="3.7" height="3.6" fill="#2e2a0a"/><rect x="400.90" y="176.20" width="2.0" height="1.7" fill="#e4dc24"/><rect x="400.60" y="179.20" width="4.8" height="0.6" fill="#3c6a3a"/><path d="M403.3 184.20 H408.0" stroke="#b0b0b0" stroke-width="0.4" stroke-dasharray="0.5 0.5"/><rect x="408.00" y="181.40" width="5.8" height="5.6" rx="0.9" fill="#63b35f"/><rect x="408.60" y="181.40" width="5.2" height="1.2" rx="0.5" fill="#8ed38a"/><rect x="408.30" y="182.70" width="3.7" height="3.6" fill="#2e2a0a"/><rect x="408.90" y="183.70" width="2.0" height="1.7" fill="#e4dc24"/><rect x="408.60" y="186.70" width="4.8" height="0.6" fill="#3c6a3a"/><path d="M395.0 191.70 H400.0" stroke="#b0b0b0" stroke-width="0.4" stroke-dasharray="0.5 0.5"/><rect x="393.10" y="189.80" width="3.8" height="3.8" fill="#fff" stroke="#8c9ab0" stroke-width="0.45"/><path d="M393.90 191.70 H396.10" stroke="#3a4a8a" stroke-width="0.45"/><rect x="400.00" y="188.90" width="5.8" height="5.6" rx="0.9" fill="#63b35f"/><rect x="400.60" y="188.90" width="5.2" height="1.2" rx="0.5" fill="#8ed38a"/><rect x="400.30" y="190.20" width="3.7" height="3.6" fill="#2e2a0a"/><rect x="400.90" y="191.20" width="2.0" height="1.7" fill="#e4dc24"/><rect x="400.60" y="194.20" width="4.8" height="0.6" fill="#3c6a3a"/><path d="M403.3 199.20 H408.0" stroke="#b0b0b0" stroke-width="0.4" stroke-dasharray="0.5 0.5"/><rect x="408.00" y="196.40" width="5.8" height="5.6" rx="0.9" fill="#63b35f"/><rect x="408.60" y="196.40" width="5.2" height="1.2" rx="0.5" fill="#8ed38a"/><rect x="408.30" y="197.70" width="3.7" height="3.6" fill="#2e2a0a"/><rect x="408.90" y="198.70" width="2.0" height="1.7" fill="#e4dc24"/><rect x="408.60" y="201.70" width="4.8" height="0.6" fill="#3c6a3a"/><path d="M403.3 206.70 H408.0" stroke="#b0b0b0" stroke-width="0.4" stroke-dasharray="0.5 0.5"/><rect x="408.00" y="203.90" width="5.8" height="5.6" rx="0.9" fill="#63b35f"/><rect x="408.60" y="203.90" width="5.2" height="1.2" rx="0.5" fill="#8ed38a"/><rect x="408.30" y="205.20" width="3.7" height="3.6" fill="#2e2a0a"/><rect x="408.90" y="206.20" width="2.0" height="1.7" fill="#e4dc24"/><rect x="408.60" y="209.20" width="4.8" height="0.6" fill="#3c6a3a"/><path d="M403.3 214.20 H408.0" stroke="#b0b0b0" stroke-width="0.4" stroke-dasharray="0.5 0.5"/><rect x="408.00" y="211.40" width="5.8" height="5.6" rx="0.9" fill="#63b35f"/><rect x="408.60" y="211.40" width="5.2" height="1.2" rx="0.5" fill="#8ed38a"/><rect x="408.30" y="212.70" width="3.7" height="3.6" fill="#2e2a0a"/><rect x="408.90" y="213.70" width="2.0" height="1.7" fill="#e4dc24"/><rect x="408.60" y="216.70" width="4.8" height="0.6" fill="#3c6a3a"/><path d="M403.3 221.70 H408.0" stroke="#b0b0b0" stroke-width="0.4" stroke-dasharray="0.5 0.5"/><rect x="408.00" y="218.90" width="5.8" height="5.6" rx="0.9" fill="#63b35f"/><rect x="408.60" y="218.90" width="5.2" height="1.2" rx="0.5" fill="#8ed38a"/><rect x="408.30" y="220.20" width="3.7" height="3.6" fill="#2e2a0a"/><rect x="408.90" y="221.20" width="2.0" height="1.7" fill="#e4dc24"/><rect x="408.60" y="224.20" width="4.8" height="0.6" fill="#3c6a3a"/><path d="M403.3 229.20 H408.0" stroke="#b0b0b0" stroke-width="0.4" stroke-dasharray="0.5 0.5"/><rect x="408.00" y="226.40" width="5.8" height="5.6" rx="0.9" fill="#63b35f"/><rect x="408.60" y="226.40" width="5.2" height="1.2" rx="0.5" fill="#8ed38a"/><rect x="408.30" y="227.70" width="3.7" height="3.6" fill="#2e2a0a"/><rect x="408.90" y="228.70" width="2.0" height="1.7" fill="#e4dc24"/><rect x="408.60" y="231.70" width="4.8" height="0.6" fill="#3c6a3a"/><path d="M403.3 236.70 H408.0" stroke="#b0b0b0" stroke-width="0.4" stroke-dasharray="0.5 0.5"/><rect x="408.00" y="233.90" width="5.8" height="5.6" rx="0.9" fill="#63b35f"/><rect x="408.60" y="233.90" width="5.2" height="1.2" rx="0.5" fill="#8ed38a"/><rect x="408.30" y="235.20" width="3.7" height="3.6" fill="#2e2a0a"/><rect x="408.90" y="236.20" width="2.0" height="1.7" fill="#e4dc24"/><rect x="408.60" y="239.20" width="4.8" height="0.6" fill="#3c6a3a"/><path d="M403.3 244.20 H408.0" stroke="#b0b0b0" stroke-width="0.4" stroke-dasharray="0.5 0.5"/><rect x="408.00" y="241.40" width="5.8" height="5.6" rx="0.9" fill="#63b35f"/><rect x="408.60" y="241.40" width="5.2" height="1.2" rx="0.5" fill="#8ed38a"/><rect x="408.30" y="242.70" width="3.7" height="3.6" fill="#2e2a0a"/><rect x="408.90" y="243.70" width="2.0" height="1.7" fill="#e4dc24"/><rect x="408.60" y="246.70" width="4.8" height="0.6" fill="#3c6a3a"/><path d="M403.3 251.70 H408.0" stroke="#b0b0b0" stroke-width="0.4" stroke-dasharray="0.5 0.5"/><rect x="408.00" y="248.90" width="5.8" height="5.6" rx="0.9" fill="#63b35f"/><rect x="408.60" y="248.90" width="5.2" height="1.2" rx="0.5" fill="#8ed38a"/><rect x="408.30" y="250.20" width="3.7" height="3.6" fill="#2e2a0a"/><rect x="408.90" y="251.20" width="2.0" height="1.7" fill="#e4dc24"/><rect x="408.60" y="254.20" width="4.8" height="0.6" fill="#3c6a3a"/><path d="M403.3 259.20 H408.0" stroke="#b0b0b0" stroke-width="0.4" stroke-dasharray="0.5 0.5"/><rect x="408.00" y="256.40" width="5.8" height="5.6" rx="0.9" fill="#63b35f"/><rect x="408.60" y="256.40" width="5.2" height="1.2" rx="0.5" fill="#8ed38a"/><rect x="408.30" y="257.70" width="3.7" height="3.6" fill="#2e2a0a"/><rect x="408.90" y="258.70" width="2.0" height="1.7" fill="#e4dc24"/><rect x="408.60" y="261.70" width="4.8" height="0.6" fill="#3c6a3a"/><path d="M403.3 266.70 H408.0" stroke="#b0b0b0" stroke-width="0.4" stroke-dasharray="0.5 0.5"/><rect x="408.00" y="263.90" width="5.8" height="5.6" rx="0.9" fill="#63b35f"/><rect x="408.60" y="263.90" width="5.2" height="1.2" rx="0.5" fill="#8ed38a"/><rect x="408.30" y="265.20" width="3.7" height="3.6" fill="#2e2a0a"/><rect x="408.90" y="266.20" width="2.0" height="1.7" fill="#e4dc24"/><rect x="408.60" y="269.20" width="4.8" height="0.6" fill="#3c6a3a"/><path d="M403.3 274.20 H408.0" stroke="#b0b0b0" stroke-width="0.4" stroke-dasharray="0.5 0.5"/><rect x="408.00" y="271.40" width="5.8" height="5.6" rx="0.9" fill="#63b35f"/><rect x="408.60" y="271.40" width="5.2" height="1.2" rx="0.5" fill="#8ed38a"/><rect x="408.30" y="272.70" width="3.7" height="3.6" fill="#2e2a0a"/><rect x="408.90" y="273.70" width="2.0" height="1.7" fill="#e4dc24"/><rect x="408.60" y="276.70" width="4.8" height="0.6" fill="#3c6a3a"/><path d="M403.3 281.70 H408.0" stroke="#b0b0b0" stroke-width="0.4" stroke-dasharray="0.5 0.5"/><rect x="408.00" y="278.90" width="5.8" height="5.6" rx="0.9" fill="#63b35f"/><rect x="408.60" y="278.90" width="5.2" height="1.2" rx="0.5" fill="#8ed38a"/><rect x="408.30" y="280.20" width="3.7" height="3.6" fill="#2e2a0a"/><rect x="408.90" y="281.20" width="2.0" height="1.7" fill="#e4dc24"/><rect x="408.60" y="284.20" width="4.8" height="0.6" fill="#3c6a3a"/><path d="M403.3 289.20 H408.0" stroke="#b0b0b0" stroke-width="0.4" stroke-dasharray="0.5 0.5"/><rect x="408.00" y="286.40" width="5.8" height="5.6" rx="0.9" fill="#63b35f"/><rect x="408.60" y="286.40" width="5.2" height="1.2" rx="0.5" fill="#8ed38a"/><rect x="408.30" y="287.70" width="3.7" height="3.6" fill="#2e2a0a"/><rect x="408.90" y="288.70" width="2.0" height="1.7" fill="#e4dc24"/><rect x="408.60" y="291.70" width="4.8" height="0.6" fill="#3c6a3a"/></svg>
<span class="t" style="top:55px;font-size:4.6px;line-height:5.52px;color:#111;letter-spacing:0.026px;left:408.30px;">PAT PID 0</span>
<span class="t" style="top:62px;font-size:4.6px;line-height:5.52px;color:#111;letter-spacing:-0.036px;left:416.20px;">PMT PID 16 - Network</span>
<span class="t" style="top:70px;font-size:4.6px;line-height:5.52px;color:#111;letter-spacing:-0.043px;left:416.20px;">PMT PID 301 - Progr. 301</span>
<span class="t" style="top:77px;font-size:4.6px;line-height:5.52px;color:#111;letter-spacing:-0.043px;left:416.20px;">PMT PID 302 - Progr. 302</span>
<span class="t" style="top:85px;font-size:4.6px;line-height:5.52px;color:#111;letter-spacing:-0.043px;left:416.20px;">PMT PID 303 - Progr. 303</span>
<div style="left:415.20px;top:90.70px;width:54.20px;height:7.00px;background:#0a74d6;"></div>
<span class="t" style="top:92px;font-size:4.6px;line-height:5.52px;color:#ffffff;letter-spacing:-0.043px;left:416.20px;">PMT PID 304 - Progr. 304</span>
<span class="t" style="top:100px;font-size:4.6px;line-height:5.52px;color:#111;letter-spacing:-0.043px;left:416.20px;">PMT PID 305 - Progr. 305</span>
<span class="t" style="top:107px;font-size:4.6px;line-height:5.52px;color:#111;letter-spacing:-0.043px;left:416.20px;">PMT PID 306 - Progr. 306</span>
<span class="t" style="top:115px;font-size:4.6px;line-height:5.52px;color:#111;letter-spacing:-0.043px;left:416.20px;">PMT PID 307 - Progr. 307</span>
<span class="t" style="top:122px;font-size:4.6px;line-height:5.52px;color:#111;letter-spacing:-0.043px;left:416.20px;">PMT PID 308 - Progr. 308</span>
<span class="t" style="top:130px;font-size:4.6px;line-height:5.52px;color:#111;letter-spacing:-0.043px;left:416.20px;">PMT PID 309 - Progr. 309</span>
<span class="t" style="top:137px;font-size:4.6px;line-height:5.52px;color:#111;letter-spacing:-0.043px;left:416.20px;">PMT PID 310 - Progr. 310</span>
<span class="t" style="top:145px;font-size:4.6px;line-height:5.52px;color:#111;letter-spacing:-0.015px;left:416.20px;">PMT PID 311 - Progr. 311</span>
<span class="t" style="top:152px;font-size:4.6px;line-height:5.52px;color:#111;letter-spacing:-0.094px;left:416.20px;">PMT PID 1001 - Progr. 1001</span>
<span class="t" style="top:160px;font-size:4.6px;line-height:5.52px;color:#111;letter-spacing:-0.094px;left:416.20px;">PMT PID 1002 - Progr. 1002</span>
<span class="t" style="top:167px;font-size:4.6px;line-height:5.52px;color:#111;letter-spacing:-0.094px;left:416.20px;">PMT PID 1003 - Progr. 1003</span>
<span class="t" style="top:175px;font-size:4.6px;line-height:5.52px;color:#111;left:408.30px;">TOT PID 20</span>
<span class="t" style="top:182px;font-size:4.6px;line-height:5.52px;color:#111;left:416.20px;">2022/06/04 15:15:42</span>
<span class="t" style="top:190px;font-size:4.6px;line-height:5.52px;color:#111;left:408.30px;">SDT PID 17 &lt;14&gt;</span>
<span class="t" style="top:197px;font-size:4.6px;line-height:5.52px;color:#111;left:416.20px;">301 Россия HD</span>
<span class="t" style="top:205px;font-size:4.6px;line-height:5.52px;color:#111;left:416.20px;">302 Россия 1</span>
<span class="t" style="top:212px;font-size:4.6px;line-height:5.52px;color:#111;left:416.20px;">303 Россия 1 (+2)</span>
<span class="t" style="top:220px;font-size:4.6px;line-height:5.52px;color:#111;left:416.20px;">304 Россия 1 (+4)</span>
<span class="t" style="top:227px;font-size:4.6px;line-height:5.52px;color:#111;left:416.20px;">305 Россия 24</span>
<span class="t" style="top:235px;font-size:4.6px;line-height:5.52px;color:#111;left:416.20px;">306 Россия К</span>
<span class="t" style="top:242px;font-size:4.6px;line-height:5.52px;color:#111;left:416.20px;">307 Карусель</span>
<span class="t" style="top:250px;font-size:4.6px;line-height:5.52px;color:#111;left:416.20px;">308 Звезда</span>
<span class="t" style="top:257px;font-size:4.6px;line-height:5.52px;color:#111;left:416.20px;">309 Звезда (+2)</span>
<span class="t" style="top:265px;font-size:4.6px;line-height:5.52px;color:#111;left:416.20px;">310 Звезда (+4)</span>
<span class="t" style="top:272px;font-size:4.6px;line-height:5.52px;color:#111;left:416.20px;">311 КИНОСЕМЬЯ HD</span>
<span class="t" style="top:280px;font-size:4.6px;line-height:5.52px;color:#111;left:416.20px;">1001 Радио Маяк</span>
<span class="t" style="top:287px;font-size:4.6px;line-height:5.52px;color:#111;left:416.20px;">1002 Радио России</span>
<div style="left:492.00px;top:52.60px;width:153.80px;height:91.20px;background:#ffffff;border:0.5px solid #9a9da4;"></div>
<span class="t" style="top:55px;font-size:4.6px;line-height:5.52px;color:#111;letter-spacing:-0.095px;left:494.30px;">Program Number: 304</span>
<span class="t" style="top:61px;font-size:4.6px;line-height:5.52px;color:#111;letter-spacing:-0.053px;left:494.30px;">PCR on PID 0 (0x0000)</span>
<span class="t" style="top:67px;font-size:4.6px;line-height:5.52px;color:#111;letter-spacing:-0.083px;left:494.30px;">PMT Version: 0</span>
<span class="t" style="top:73px;font-size:4.6px;line-height:5.52px;color:#111;letter-spacing:-0.018px;left:494.30px;">Service name: Россия 1 (+4)</span>
<svg style="left:646.3px;top:53.5px;" width="6" height="5" viewBox="0 0 6 5"><path d="M1.5 3.3 L3 1.8 L4.5 3.3" fill="none" stroke="#b0b0b0" stroke-width="0.5"/></svg>
<svg style="left:646.3px;top:138.5px;" width="6" height="5" viewBox="0 0 6 5"><path d="M1.5 1.7 L3 3.2 L4.5 1.7" fill="none" stroke="#b0b0b0" stroke-width="0.5"/></svg>
<span class="t" style="top:146px;font-size:4.6px;line-height:5.52px;color:#111;letter-spacing:-0.204px;left:496.40px;">Active PIDs:</span>
<div style="left:521.20px;top:148.40px;width:5.20px;height:5.20px;background:#fff;border:0.5px solid #8c8c8c;"></div>
<span class="t" style="top:149px;font-size:4.6px;line-height:5.52px;color:#111;letter-spacing:-0.112px;left:528.00px;">Disabled</span>
<div style="left:548.20px;top:148.40px;width:5.20px;height:5.20px;background:#fff;border:0.5px solid #8c8c8c;"></div>
<svg style="left:548.2px;top:148.4px;" width="5.2" height="5.2" viewBox="0 0 5.2 5.2"><path d="M1.1 2.7 L2.2 3.8 L4.2 1.3" fill="none" stroke="#222" stroke-width="0.6"/></svg>
<span class="t" style="top:149px;font-size:4.6px;line-height:5.52px;color:#111;letter-spacing:-0.079px;left:555.00px;">Sort Decending</span>
<div style="left:588.40px;top:148.40px;width:5.20px;height:5.20px;background:#fff;border:0.5px solid #8c8c8c;border-radius:50%;"></div>
<div style="left:589.80px;top:149.80px;width:2.40px;height:2.40px;background:#222;border-radius:50%;"></div>
<span class="t" style="top:149px;font-size:4.6px;line-height:5.52px;color:#111;letter-spacing:-0.130px;left:595.50px;">Sort by Rate</span>
<div style="left:622.40px;top:148.40px;width:5.20px;height:5.20px;background:#fff;border:0.5px solid #8c8c8c;border-radius:50%;"></div>
<span class="t" style="top:149px;font-size:4.6px;line-height:5.52px;color:#111;letter-spacing:-0.138px;left:629.00px;">Sort by PID</span>
<span class="t" style="top:157px;font-size:4.0px;line-height:4.80px;color:#222;letter-spacing:-0.059px;left:498.50px;">29 (0.002%)</span>
<span class="t" style="top:163px;font-size:4.0px;line-height:4.80px;color:#222;letter-spacing:-0.059px;left:498.50px;">0 (0.006%)</span>
<span class="t" style="top:169px;font-size:4.0px;line-height:4.80px;color:#222;letter-spacing:-0.059px;left:498.50px;">1 (0.006%)</span>
<span class="t" style="top:175px;font-size:4.0px;line-height:4.80px;color:#222;letter-spacing:-0.059px;left:498.50px;">16 (0.006%)</span>
<span class="t" style="top:181px;font-size:4.0px;line-height:4.80px;color:#222;letter-spacing:-0.059px;left:498.50px;">17 (0.006%)</span>
<span class="t" style="top:186px;font-size:4.0px;line-height:4.80px;color:#222;letter-spacing:-0.061px;left:498.50px;">1000 (0.120%)</span>
<span class="t" style="top:192px;font-size:4.0px;line-height:4.80px;color:#222;letter-spacing:-0.059px;left:498.50px;">18 (0.672%)</span>
<div style="left:496.60px;top:191.20px;width:1.20px;height:4.80px;background:#6af06a;"></div>
<div style="left:496.80px;top:197.20px;width:149.80px;height:4.80px;background:#00f000;"></div>
<span class="t" style="top:198px;font-size:3.6px;line-height:4.32px;color:#0a3a0a;right:154.20px;">8191 (99.380%)</span>
<svg style="left:647px;top:155.5px;" width="6" height="5" viewBox="0 0 6 5"><path d="M1.5 3.3 L3 1.8 L4.5 3.3" fill="none" stroke="#606060" stroke-width="0.5"/></svg>
<div style="left:648.40px;top:161.40px;width:3.40px;height:6.80px;background:#cdcdcd;"></div>
<svg style="left:647px;top:286.5px;" width="6" height="5" viewBox="0 0 6 5"><path d="M1.5 1.7 L3 3.2 L4.5 1.7" fill="none" stroke="#606060" stroke-width="0.5"/></svg>
<span class="t" style="top:53px;font-size:4.6px;line-height:5.52px;color:#111;letter-spacing:-0.068px;left:659.00px;">Video Decode</span>
<div style="left:656.50px;top:57.50px;width:150.00px;height:306.00px;border:0.5px solid #dcdcdc;"></div>
<div style="left:658.60px;top:60.80px;width:142.00px;height:300.40px;background:#000000;"></div>
<span class="t" style="top:295px;font-size:4.6px;line-height:5.52px;color:#111;letter-spacing:-0.124px;left:394.00px;">General Information</span>
<div style="left:393.00px;top:303.00px;width:97.00px;height:6.64px;background:#0b9a3c;"></div>
<span class="t" style="top:304px;font-size:4.8px;line-height:5.76px;color:#ffffff;letter-spacing:0.046px;left:393.80px;">Source: TCP/IP</span>
<div style="left:393.00px;top:309.59px;width:97.00px;height:6.64px;background:#30f47a;"></div>
<span class="t" style="top:311px;font-size:4.8px;line-height:5.76px;color:#08300f;letter-spacing:0.098px;left:393.80px;">Tuner: 127.0.0.1 port 6970</span>
<div style="left:393.00px;top:316.18px;width:97.00px;height:6.64px;background:#0b9a3c;"></div>
<span class="t" style="top:317px;font-size:4.8px;line-height:5.76px;color:#ffffff;letter-spacing:0.120px;left:393.80px;">Signal: n/a</span>
<div style="left:393.00px;top:322.77px;width:97.00px;height:6.64px;background:#30f47a;"></div>
<div style="left:393.00px;top:329.36px;width:97.00px;height:6.64px;background:#0b9a3c;"></div>
<span class="t" style="top:331px;font-size:4.8px;line-height:5.76px;color:#ffffff;letter-spacing:0.132px;left:393.80px;">Null BER: 0.000000E+000</span>
<div style="left:393.00px;top:335.94px;width:97.00px;height:6.64px;background:#30f47a;"></div>
<div style="left:393.00px;top:342.53px;width:97.00px;height:6.64px;background:#0b9a3c;"></div>
<span class="t" style="top:344px;font-size:4.8px;line-height:5.76px;color:#ffffff;letter-spacing:0.108px;left:393.80px;">Profile: Default</span>
<div style="left:393.00px;top:349.12px;width:97.00px;height:6.64px;background:#30f47a;"></div>
<span class="t" style="top:350px;font-size:4.8px;line-height:5.76px;color:#08300f;letter-spacing:0.083px;left:393.80px;">Network Type: DVB</span>
<div style="left:393.00px;top:355.71px;width:97.00px;height:6.64px;background:#0b9a3c;"></div>
<span class="t" style="top:357px;font-size:4.8px;line-height:5.76px;color:#ffffff;letter-spacing:0.139px;left:393.80px;">Run Time: 000:00:44</span>
<span class="t" style="top:295px;font-size:4.6px;line-height:5.52px;color:#111;letter-spacing:-0.078px;left:496.50px;">MPEG-2 Statistics</span>
<div style="left:495.80px;top:302.00px;width:156.60px;height:60.00px;background:#000000;"></div>
<span class="t" style="top:304px;font-size:4.6px;line-height:5.52px;color:#00d000;left:531.80px;">PAT</span>
<span class="t" style="top:304px;font-size:4.6px;line-height:5.52px;color:#00d000;left:551.30px;">PMT</span>
<span class="t" style="top:304px;font-size:4.6px;line-height:5.52px;color:#00d000;left:570.70px;">CAT</span>
<span class="t" style="top:304px;font-size:4.6px;line-height:5.52px;color:#00d000;left:590.60px;">NIT</span>
<span class="t" style="top:304px;font-size:4.6px;line-height:5.52px;color:#00d000;left:610.70px;">SDT</span>
<span class="t" style="top:304px;font-size:4.6px;line-height:5.52px;color:#00d000;left:630.00px;">EIT</span>
<span class="t" style="top:311px;font-size:4.6px;line-height:5.52px;color:#00d000;letter-spacing:0.182px;left:498.30px;">Sections</span>
<span class="t" style="top:311px;font-size:4.6px;line-height:5.52px;color:#00d000;left:531.80px;">318</span>
<span class="t" style="top:311px;font-size:4.6px;line-height:5.52px;color:#00d000;left:551.30px;">0</span>
<span class="t" style="top:311px;font-size:4.6px;line-height:5.52px;color:#00d000;left:570.70px;">736</span>
<span class="t" style="top:311px;font-size:4.6px;line-height:5.52px;color:#00d000;left:590.60px;">731</span>
<span class="t" style="top:311px;font-size:4.6px;line-height:5.52px;color:#00d000;left:610.70px;">246</span>
<span class="t" style="top:311px;font-size:4.6px;line-height:5.52px;color:#00d000;left:630.00px;">5.6k</span>
<span class="t" style="top:317px;font-size:4.6px;line-height:5.52px;color:#00d000;letter-spacing:0.233px;left:498.30px;">CRC Errors</span>
<span class="t" style="top:317px;font-size:4.6px;line-height:5.52px;color:#00d000;left:531.80px;">0</span>
<span class="t" style="top:317px;font-size:4.6px;line-height:5.52px;color:#00d000;left:551.30px;">0</span>
<span class="t" style="top:317px;font-size:4.6px;line-height:5.52px;color:#00d000;left:570.70px;">0</span>
<span class="t" style="top:317px;font-size:4.6px;line-height:5.52px;color:#00d000;left:590.60px;">0</span>
<span class="t" style="top:317px;font-size:4.6px;line-height:5.52px;color:#00d000;left:610.70px;">0</span>
<span class="t" style="top:317px;font-size:4.6px;line-height:5.52px;color:#00d000;left:630.00px;">0</span>
<span class="t" style="top:325px;font-size:4.6px;line-height:5.52px;color:#00d000;letter-spacing:0.176px;left:498.30px;">Continuity Errors:</span>
<span class="t" style="top:325px;font-size:4.6px;line-height:5.52px;color:#00d000;left:551.30px;">0</span>
<span class="t" style="top:325px;font-size:4.6px;line-height:5.52px;color:#00d000;letter-spacing:0.146px;left:577.40px;">Max. bitrate:</span>
<span class="t" style="top:325px;font-size:4.6px;line-height:5.52px;color:#00d000;left:611.00px;">n/a</span>
<span class="t" style="top:331px;font-size:4.6px;line-height:5.52px;color:#00d000;letter-spacing:0.133px;left:498.30px;">TEI Errors:</span>
<span class="t" style="top:331px;font-size:4.6px;line-height:5.52px;color:#00d000;left:551.30px;">0</span>
<span class="t" style="top:331px;font-size:4.6px;line-height:5.52px;color:#00d000;letter-spacing:0.151px;left:577.40px;">Last sec.:</span>
<span class="t" style="top:331px;font-size:4.6px;line-height:5.52px;color:#00d000;letter-spacing:0.197px;left:611.00px;">70.920 Mbit</span>
<span class="t" style="top:338px;font-size:4.6px;line-height:5.52px;color:#00d000;letter-spacing:0.207px;left:498.30px;">Sync losses:</span>
<span class="t" style="top:338px;font-size:4.6px;line-height:5.52px;color:#00d000;left:551.30px;">0</span>
<span class="t" style="top:338px;font-size:4.6px;line-height:5.52px;color:#00d000;letter-spacing:0.153px;left:577.40px;">In buffer:</span>
<span class="t" style="top:345px;font-size:4.6px;line-height:5.52px;color:#00d000;letter-spacing:0.123px;left:577.40px;">Out buffer:</span>
<div style="left:759.00px;top:416.30px;width:37.00px;height:12.00px;background:rgba(255,255,255,0.35);"></div>
<span class="t" style="top:419px;font-size:6.6px;line-height:7.92px;color:#ffffff;letter-spacing:0.799px;font-weight:bold;left:761.80px;">PRO</span>
<svg style="left:779px;top:418.4px;" width="11.4" height="8.8" viewBox="0 0 11.4 8.8"><path d="M0.4 0.6 H3.6 L2.6 8.2 H0.4 Z" fill="#2a6ab0"/><path d="M3.6 0.6 H6.2 L4.8 8.2 H2.6 Z" fill="#5aa83a"/><path d="M6.2 0.6 H8.8 L7.2 8.2 H4.8 Z" fill="#f0d818"/><path d="M8.8 0.6 H11 V8.2 H7.2 Z" fill="#d82020"/></svg>
<span class="t" style="top:420px;font-size:5.2px;line-height:6.24px;color:#ffffff;font-weight:bold;left:684.80px;width:200px;text-align:center;font-style:italic;">TV</span>
</div></body></html>
